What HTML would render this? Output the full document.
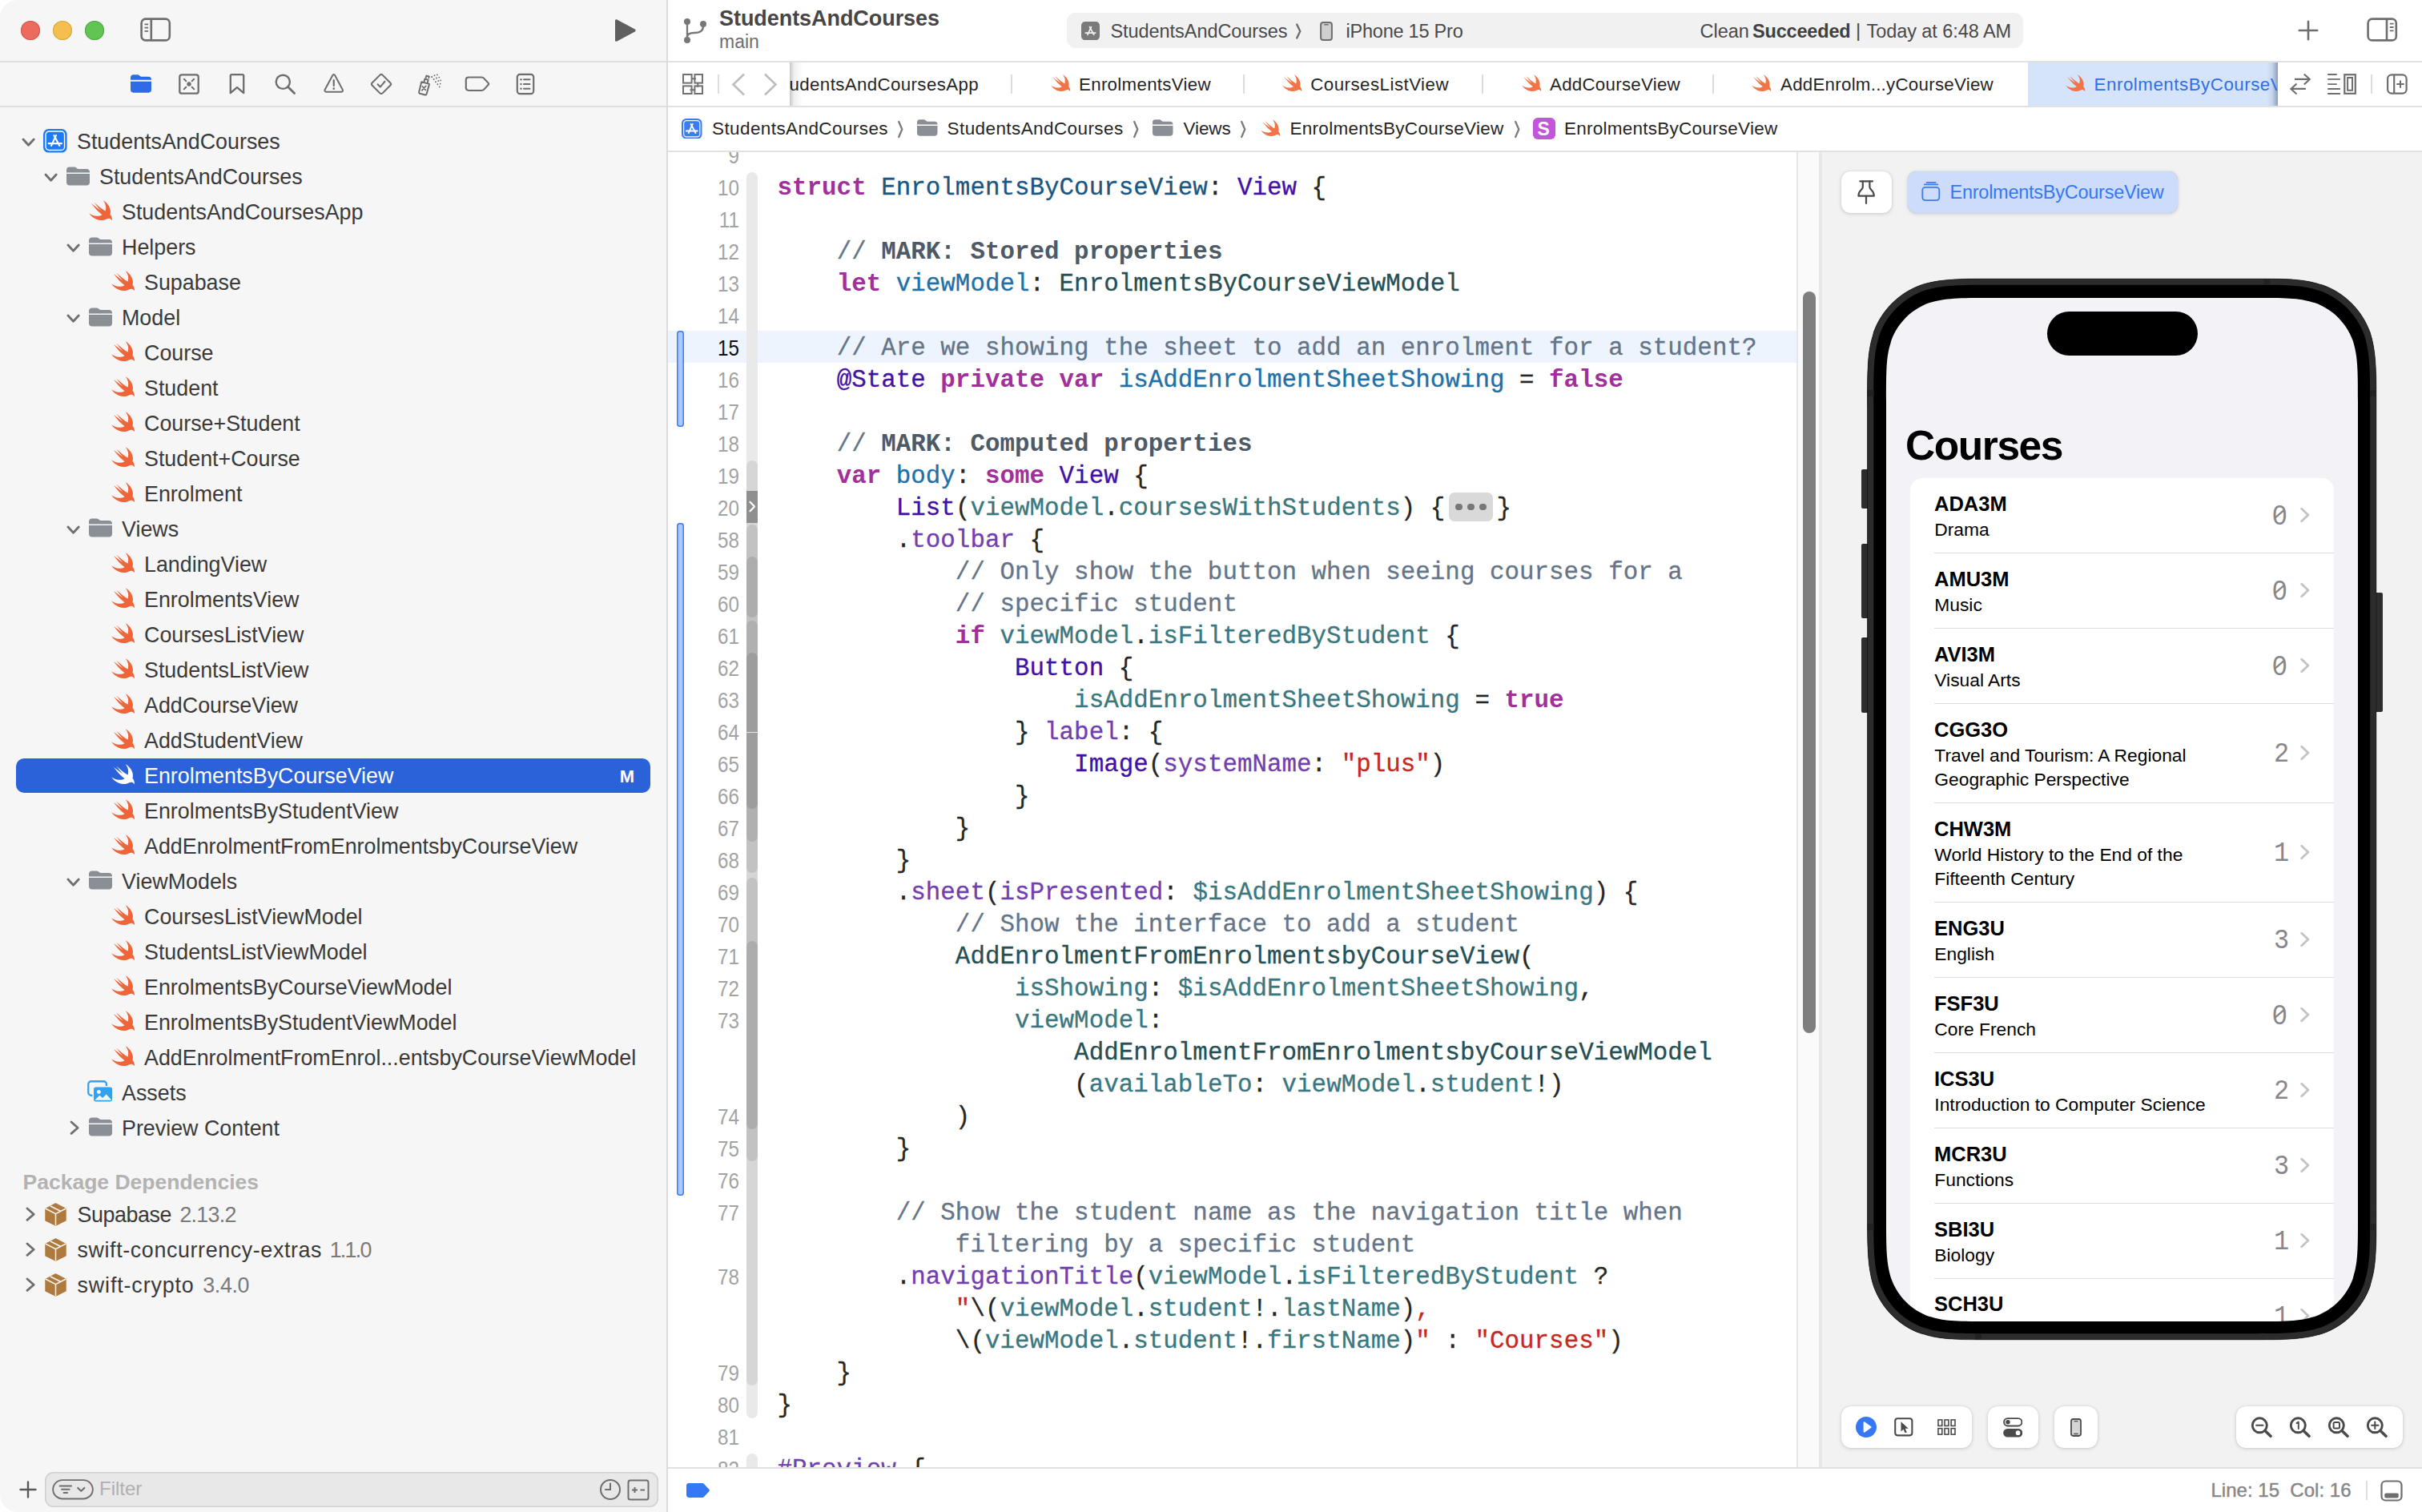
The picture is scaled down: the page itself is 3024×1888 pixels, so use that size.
<!DOCTYPE html><html><head><meta charset="utf-8"><title>Xcode</title><style>
html,body{margin:0;padding:0;background:#fff;}body{width:3024px;height:1888px;position:relative;overflow:hidden;font-family:"Liberation Sans",sans-serif;}
#w{position:absolute;left:0;top:0;width:3024px;height:1888px;overflow:hidden;}

.cl{position:absolute;left:970.5px;height:40px;font:400 30.83px/40px "Liberation Mono",monospace;white-space:pre;color:#262626;letter-spacing:.03px;-webkit-text-stroke:.3px;}
.ln{position:absolute;left:834px;width:89px;text-align:right;font:400 27.500px/40px "Liberation Sans",sans-serif;color:#a3a3a3;transform:scaleX(.88);transform-origin:100% 50%;}
.k{color:#a0309a;font-weight:700;-webkit-text-stroke:0}.td{color:#1a5682}.st{color:#4111a5}.pt{color:#254f54}.pd{color:#2270a6}.pm{color:#3b777e}.sf{color:#7040ae}.c{color:#657588}.cm{color:#4e5a66;font-weight:700;-webkit-text-stroke:0}.s{color:#c6281f}

</style></head><body><div id="w">
<div style="position:absolute;left:0px;top:0px;width:833px;height:1888px;background:#f6f6f6;border-radius:22px 0 0 22px;"></div>
<div style="position:absolute;left:832px;top:0px;width:2px;height:1888px;background:#dcdcdc;"></div>
<div style="position:absolute;left:0px;top:76px;width:832px;height:2px;background:#dedede;"></div>
<div style="position:absolute;left:0px;top:132px;width:832px;height:2px;background:#dedede;"></div>
<div style="position:absolute;left:26px;top:26px;width:24px;height:24px;border-radius:50%;background:#ed6a5e;box-shadow:inset 0 0 0 1px #d5564b;"></div>
<div style="position:absolute;left:66px;top:26px;width:24px;height:24px;border-radius:50%;background:#f5bf4f;box-shadow:inset 0 0 0 1px #d9a43c;"></div>
<div style="position:absolute;left:106px;top:26px;width:24px;height:24px;border-radius:50%;background:#61c554;box-shadow:inset 0 0 0 1px #4fa93f;"></div>
<svg style="position:absolute;left:174px;top:21px;" width="42" height="32" viewBox="0 0 42 32" preserveAspectRatio="none"><rect x="2.600" y="2.600" width="35.200" height="26.800" rx="5.200" fill="none" stroke="#6e6e6e" stroke-width="2.600"/><path d="M14.800 2.600V29.400" stroke="#6e6e6e" stroke-width="2.600"/><path d="M6.500 9.300h4.600M6.500 13.600h4.600M6.500 17.900h4.600" stroke="#6e6e6e" stroke-width="1.800"/></svg>
<svg style="position:absolute;left:765px;top:23px;" width="32" height="30" viewBox="0 0 32 30" preserveAspectRatio="none"><path d="M3 2.800C3 1.500 4.300 .8 5.400 1.400L27.800 13.600c1.100.6 1.100 2.200 0 2.800L5.400 28.600C4.300 29.200 3 28.500 3 27.200z" fill="#5f5f5f"/></svg>
<svg style="position:absolute;left:163px;top:93px;" width="26" height="23" viewBox="0 0 26 23" preserveAspectRatio="none"><path fill="#2f6be6" d="M0 4C0 1.700 1.400 .3 3.600 .3h4.700c1.200 0 1.900.3 2.700 1l.8.700c.6.500 1.100.700 1.900.700h8.700c2.200 0 3.600 1.400 3.600 3.600v.500H0z"/><path fill="#2f6be6" d="M0 8.700h26v10.400c0 2.200-1.400 3.600-3.600 3.600H3.600C1.400 22.700 0 21.300 0 19.100z"/></svg>
<svg style="position:absolute;left:222px;top:91px;" width="28" height="28" viewBox="0 0 28 28" preserveAspectRatio="none"><rect x="2.300" y="2.300" width="23.400" height="23.400" rx="2.800" fill="none" stroke="#6e6e6e" stroke-width="2.300"/><circle cx="14" cy="14" r="2.700" fill="#6e6e6e"/><path d="M7.800 7.800l2.500 2.500M20.200 7.800l-2.500 2.500M7.800 20.200l2.500-2.500M20.200 20.200l-2.500-2.500" stroke="#6e6e6e" stroke-width="2" stroke-linecap="round"/></svg>
<svg style="position:absolute;left:285px;top:91px;" width="22" height="28" viewBox="0 0 22 28" preserveAspectRatio="none"><path d="M2.800 3.800c0-1 .6-1.600 1.600-1.600h13.200c1 0 1.600.6 1.600 1.600v21.400l-8.200-7-8.200 7z" fill="none" stroke="#6e6e6e" stroke-width="2.300" stroke-linejoin="round"/></svg>
<svg style="position:absolute;left:342px;top:91px;" width="28" height="28" viewBox="0 0 28 28" preserveAspectRatio="none"><circle cx="11.300" cy="11.300" r="8.600" fill="none" stroke="#6e6e6e" stroke-width="2.400"/><path d="M17.600 17.600L25.600 25.600" stroke="#6e6e6e" stroke-width="2.800" stroke-linecap="round"/></svg>
<svg style="position:absolute;left:403.5px;top:91px;" width="25.5" height="26" viewBox="0 0 28 27" preserveAspectRatio="none"><path d="M12.300 3.300c.8-1.400 2.600-1.400 3.400 0l10.400 18.400c.8 1.400 0 2.900-1.700 2.900H3.600c-1.700 0-2.500-1.500-1.700-2.900z" fill="none" stroke="#6e6e6e" stroke-width="2.200" stroke-linejoin="round"/><path d="M14 9.500v7.200" stroke="#6e6e6e" stroke-width="2.400" stroke-linecap="round"/><circle cx="14" cy="20.400" r="1.500" fill="#6e6e6e"/></svg>
<svg style="position:absolute;left:462px;top:91px;" width="28" height="28" viewBox="0 0 30 30" preserveAspectRatio="none"><path d="M13.300 2.800c1-1 2.400-1 3.400 0l10.500 10.500c1 1 1 2.400 0 3.400L16.700 27.200c-1 1-2.400 1-3.400 0L2.800 16.700c-1-1-1-2.400 0-3.400z" fill="none" stroke="#6e6e6e" stroke-width="2.200"/><path d="M10.300 15.300l3.300 3.500 6.200-7.300" fill="none" stroke="#6e6e6e" stroke-width="2.200" stroke-linecap="round" stroke-linejoin="round"/></svg>
<svg style="position:absolute;left:520px;top:90px;" width="34" height="30" viewBox="0 0 34 30" preserveAspectRatio="none"><g fill="none" stroke="#6e6e6e" stroke-width="2" stroke-linejoin="round"><path d="M6.300 12.300l9.700 2.600-3.400 12.700c-.2.700-.9 1.100-1.600.9L4 26.700c-.7-.2-1.100-.9-.9-1.600z"/><path d="M9.300 12.800l1.100-4.200 4.300 1.200-1.100 4.200"/><path d="M11.500 7.800l.9-3.200 3.300.9-.6 2.400"/></g><path d="M7.300 17.800l4 4.600M11.800 17.300l-5 5.600" stroke="#6e6e6e" stroke-width="1.700" stroke-linecap="round"/><g fill="#6e6e6e" transform="translate(-.5,1.800) scale(.96)"><circle cx="20.500" cy="4.500" r="1.100"/><circle cx="24" cy="2.600" r="1"/><circle cx="27.500" cy="1.600" r="1"/><circle cx="23" cy="7.500" r="1"/><circle cx="26.500" cy="6" r="1"/><circle cx="30" cy="5" r="1"/><circle cx="25.500" cy="10.800" r="1"/><circle cx="29" cy="9.500" r="1"/><circle cx="32" cy="9" r=".9"/><circle cx="28" cy="14" r="1"/><circle cx="31.500" cy="13.300" r=".9"/><circle cx="30.500" cy="17.300" r=".9"/></g></svg>
<svg style="position:absolute;left:580px;top:95px;" width="32" height="19.5" viewBox="0 0 32 22" preserveAspectRatio="none"><path d="M5.300 1.800h16c1.300 0 2.200.5 3 1.500l5.300 6.300c.7.900.7 1.900 0 2.800l-5.300 6.300c-.8 1-1.700 1.500-3 1.500h-16c-2.200 0-3.500-1.300-3.500-3.500V5.300c0-2.200 1.300-3.500 3.500-3.500z" fill="none" stroke="#6e6e6e" stroke-width="2.200"/></svg>
<svg style="position:absolute;left:644px;top:91px;" width="24" height="28" viewBox="0 0 24 28" preserveAspectRatio="none"><rect x="1.800" y="1.800" width="20.400" height="24.400" rx="3.600" fill="none" stroke="#6e6e6e" stroke-width="2.200"/><path d="M10 8.300h7.500M10 14h7.500M10 19.700h7.500" stroke="#6e6e6e" stroke-width="2" stroke-linecap="round"/><circle cx="6.500" cy="8.300" r="1.200" fill="#6e6e6e"/><circle cx="6.500" cy="14" r="1.200" fill="#6e6e6e"/><circle cx="6.500" cy="19.700" r="1.200" fill="#6e6e6e"/></svg>
<svg style="position:absolute;left:27.4px;top:172.20000000000002px;" width="17.2" height="11.2" viewBox="-2 -2 17.2 11.2" preserveAspectRatio="none"><path d="M0 0L6.6 7.2L13.2 0" fill="none" stroke="#6f6f6f" stroke-width="2.8" stroke-linecap="round" stroke-linejoin="round"/></svg>
<svg style="position:absolute;left:54.4px;top:161.10000000000002px;" width="29.6" height="29.6" viewBox="0 0 30 30" preserveAspectRatio="none"><rect x="0" y="0" width="30" height="30" rx="6.8" fill="#1f7af5"/><rect x="3.1" y="3.1" width="23.8" height="23.8" rx="4.2" fill="none" stroke="#fff" stroke-width="1.4"/><g stroke="#fff" stroke-width="2.2" stroke-linecap="round" fill="none"><path d="M10.2 21.2L16.2 8.2"/><path d="M13.6 8.2L20.6 21.2"/><path d="M6.800 18.300H23.200"/></g></svg>
<span style="position:absolute;top:164.47px;font:400 26.85px/1 'Liberation Sans',sans-serif;color:#3a3a3a;white-space:pre;left:96.00px;">StudentsAndCourses</span>
<svg style="position:absolute;left:55.4px;top:216.17000000000002px;" width="17.2" height="11.2" viewBox="-2 -2 17.2 11.2" preserveAspectRatio="none"><path d="M0 0L6.6 7.2L13.2 0" fill="none" stroke="#6f6f6f" stroke-width="2.8" stroke-linecap="round" stroke-linejoin="round"/></svg>
<svg style="position:absolute;left:83px;top:207.77px;" width="29" height="24" viewBox="0 0 29 24" preserveAspectRatio="none"><path fill="#8a8e95" d="M0 4.2C0 1.9 1.5 .4 3.8 .4h5.4c1.3 0 2 .3 2.9 1.1l.9.8c.6.5 1.1.7 2 .7h10.2c2.3 0 3.8 1.5 3.8 3.8v.6H0z"/><path fill="#8a8e95" d="M0 9h29v10.8c0 2.3-1.5 3.8-3.8 3.8H3.8C1.500 23.6 0 22.100 0 19.800z"/></svg>
<span style="position:absolute;top:208.44px;font:400 26.85px/1 'Liberation Sans',sans-serif;color:#3a3a3a;white-space:pre;left:124.00px;">StudentsAndCourses</span>
<svg style="position:absolute;left:110.7px;top:250.24px;overflow:visible;" width="29.2" height="25.6" viewBox="2.3 3.3 18.4 16.6" preserveAspectRatio="none"><path fill="#f0643a" d="M13.543 3.41c4.114 2.47 6.545 7.162 5.549 11.131-.024.093-.05.181-.076.272l.002.001c2.062 2.538 1.5 5.258 1.236 4.745-1.072-2.086-3.066-1.568-4.088-1.043a6.803 6.803 0 0 1-.281.158l-.02.012-.002.002c-2.115 1.123-4.957 1.205-7.812-.022a12.568 12.568 0 0 1-5.64-4.838c.649.48 1.35.902 2.097 1.252 3.019 1.414 6.051 1.311 8.197-.002C9.651 12.73 7.101 9.67 5.146 7.191a10.628 10.628 0 0 1-1.005-1.384c2.34 2.142 6.038 4.83 7.365 5.576C8.69 8.408 6.208 4.743 6.324 4.86c4.436 4.47 8.528 6.996 8.528 6.996.154.085.27.154.36.213.085-.215.16-.437.224-.668.708-2.588-.09-5.548-1.893-7.992z"/></svg>
<span style="position:absolute;top:252.41px;font:400 26.85px/1 'Liberation Sans',sans-serif;color:#3a3a3a;white-space:pre;left:152.00px;">StudentsAndCoursesApp</span>
<svg style="position:absolute;left:83.4px;top:304.11px;" width="17.2" height="11.2" viewBox="-2 -2 17.2 11.2" preserveAspectRatio="none"><path d="M0 0L6.6 7.2L13.2 0" fill="none" stroke="#6f6f6f" stroke-width="2.8" stroke-linecap="round" stroke-linejoin="round"/></svg>
<svg style="position:absolute;left:111px;top:295.71000000000004px;" width="29" height="24" viewBox="0 0 29 24" preserveAspectRatio="none"><path fill="#8a8e95" d="M0 4.2C0 1.9 1.5 .4 3.8 .4h5.4c1.3 0 2 .3 2.9 1.1l.9.8c.6.5 1.1.7 2 .7h10.2c2.3 0 3.8 1.5 3.8 3.8v.6H0z"/><path fill="#8a8e95" d="M0 9h29v10.8c0 2.3-1.5 3.8-3.8 3.8H3.8C1.500 23.6 0 22.100 0 19.800z"/></svg>
<span style="position:absolute;top:296.38px;font:400 26.85px/1 'Liberation Sans',sans-serif;color:#3a3a3a;white-space:pre;left:152.00px;">Helpers</span>
<svg style="position:absolute;left:138.7px;top:338.18px;overflow:visible;" width="29.2" height="25.6" viewBox="2.3 3.3 18.4 16.6" preserveAspectRatio="none"><path fill="#f0643a" d="M13.543 3.41c4.114 2.47 6.545 7.162 5.549 11.131-.024.093-.05.181-.076.272l.002.001c2.062 2.538 1.5 5.258 1.236 4.745-1.072-2.086-3.066-1.568-4.088-1.043a6.803 6.803 0 0 1-.281.158l-.02.012-.002.002c-2.115 1.123-4.957 1.205-7.812-.022a12.568 12.568 0 0 1-5.64-4.838c.649.48 1.35.902 2.097 1.252 3.019 1.414 6.051 1.311 8.197-.002C9.651 12.73 7.101 9.67 5.146 7.191a10.628 10.628 0 0 1-1.005-1.384c2.34 2.142 6.038 4.83 7.365 5.576C8.69 8.408 6.208 4.743 6.324 4.86c4.436 4.47 8.528 6.996 8.528 6.996.154.085.27.154.36.213.085-.215.16-.437.224-.668.708-2.588-.09-5.548-1.893-7.992z"/></svg>
<span style="position:absolute;top:340.35px;font:400 26.85px/1 'Liberation Sans',sans-serif;color:#3a3a3a;white-space:pre;left:180.00px;">Supabase</span>
<svg style="position:absolute;left:83.4px;top:392.04999999999995px;" width="17.2" height="11.2" viewBox="-2 -2 17.2 11.2" preserveAspectRatio="none"><path d="M0 0L6.6 7.2L13.2 0" fill="none" stroke="#6f6f6f" stroke-width="2.8" stroke-linecap="round" stroke-linejoin="round"/></svg>
<svg style="position:absolute;left:111px;top:383.65px;" width="29" height="24" viewBox="0 0 29 24" preserveAspectRatio="none"><path fill="#8a8e95" d="M0 4.2C0 1.9 1.5 .4 3.8 .4h5.4c1.3 0 2 .3 2.9 1.1l.9.8c.6.5 1.1.7 2 .7h10.2c2.3 0 3.8 1.5 3.8 3.8v.6H0z"/><path fill="#8a8e95" d="M0 9h29v10.8c0 2.3-1.5 3.8-3.8 3.8H3.8C1.500 23.6 0 22.100 0 19.800z"/></svg>
<span style="position:absolute;top:384.32px;font:400 26.85px/1 'Liberation Sans',sans-serif;color:#3a3a3a;white-space:pre;left:152.00px;">Model</span>
<svg style="position:absolute;left:138.7px;top:426.12px;overflow:visible;" width="29.2" height="25.6" viewBox="2.3 3.3 18.4 16.6" preserveAspectRatio="none"><path fill="#f0643a" d="M13.543 3.41c4.114 2.47 6.545 7.162 5.549 11.131-.024.093-.05.181-.076.272l.002.001c2.062 2.538 1.5 5.258 1.236 4.745-1.072-2.086-3.066-1.568-4.088-1.043a6.803 6.803 0 0 1-.281.158l-.02.012-.002.002c-2.115 1.123-4.957 1.205-7.812-.022a12.568 12.568 0 0 1-5.64-4.838c.649.48 1.35.902 2.097 1.252 3.019 1.414 6.051 1.311 8.197-.002C9.651 12.73 7.101 9.67 5.146 7.191a10.628 10.628 0 0 1-1.005-1.384c2.34 2.142 6.038 4.83 7.365 5.576C8.69 8.408 6.208 4.743 6.324 4.86c4.436 4.47 8.528 6.996 8.528 6.996.154.085.27.154.36.213.085-.215.16-.437.224-.668.708-2.588-.09-5.548-1.893-7.992z"/></svg>
<span style="position:absolute;top:428.29px;font:400 26.85px/1 'Liberation Sans',sans-serif;color:#3a3a3a;white-space:pre;left:180.00px;">Course</span>
<svg style="position:absolute;left:138.7px;top:470.09px;overflow:visible;" width="29.2" height="25.6" viewBox="2.3 3.3 18.4 16.6" preserveAspectRatio="none"><path fill="#f0643a" d="M13.543 3.41c4.114 2.47 6.545 7.162 5.549 11.131-.024.093-.05.181-.076.272l.002.001c2.062 2.538 1.5 5.258 1.236 4.745-1.072-2.086-3.066-1.568-4.088-1.043a6.803 6.803 0 0 1-.281.158l-.02.012-.002.002c-2.115 1.123-4.957 1.205-7.812-.022a12.568 12.568 0 0 1-5.64-4.838c.649.48 1.35.902 2.097 1.252 3.019 1.414 6.051 1.311 8.197-.002C9.651 12.73 7.101 9.67 5.146 7.191a10.628 10.628 0 0 1-1.005-1.384c2.34 2.142 6.038 4.83 7.365 5.576C8.69 8.408 6.208 4.743 6.324 4.86c4.436 4.47 8.528 6.996 8.528 6.996.154.085.27.154.36.213.085-.215.16-.437.224-.668.708-2.588-.09-5.548-1.893-7.992z"/></svg>
<span style="position:absolute;top:472.26px;font:400 26.85px/1 'Liberation Sans',sans-serif;color:#3a3a3a;white-space:pre;left:180.00px;">Student</span>
<svg style="position:absolute;left:138.7px;top:514.06px;overflow:visible;" width="29.2" height="25.6" viewBox="2.3 3.3 18.4 16.6" preserveAspectRatio="none"><path fill="#f0643a" d="M13.543 3.41c4.114 2.47 6.545 7.162 5.549 11.131-.024.093-.05.181-.076.272l.002.001c2.062 2.538 1.5 5.258 1.236 4.745-1.072-2.086-3.066-1.568-4.088-1.043a6.803 6.803 0 0 1-.281.158l-.02.012-.002.002c-2.115 1.123-4.957 1.205-7.812-.022a12.568 12.568 0 0 1-5.64-4.838c.649.48 1.35.902 2.097 1.252 3.019 1.414 6.051 1.311 8.197-.002C9.651 12.73 7.101 9.67 5.146 7.191a10.628 10.628 0 0 1-1.005-1.384c2.34 2.142 6.038 4.83 7.365 5.576C8.69 8.408 6.208 4.743 6.324 4.86c4.436 4.47 8.528 6.996 8.528 6.996.154.085.27.154.36.213.085-.215.16-.437.224-.668.708-2.588-.09-5.548-1.893-7.992z"/></svg>
<span style="position:absolute;top:516.23px;font:400 26.85px/1 'Liberation Sans',sans-serif;color:#3a3a3a;white-space:pre;left:180.00px;">Course+Student</span>
<svg style="position:absolute;left:138.7px;top:558.03px;overflow:visible;" width="29.2" height="25.6" viewBox="2.3 3.3 18.4 16.6" preserveAspectRatio="none"><path fill="#f0643a" d="M13.543 3.41c4.114 2.47 6.545 7.162 5.549 11.131-.024.093-.05.181-.076.272l.002.001c2.062 2.538 1.5 5.258 1.236 4.745-1.072-2.086-3.066-1.568-4.088-1.043a6.803 6.803 0 0 1-.281.158l-.02.012-.002.002c-2.115 1.123-4.957 1.205-7.812-.022a12.568 12.568 0 0 1-5.64-4.838c.649.48 1.35.902 2.097 1.252 3.019 1.414 6.051 1.311 8.197-.002C9.651 12.73 7.101 9.67 5.146 7.191a10.628 10.628 0 0 1-1.005-1.384c2.34 2.142 6.038 4.83 7.365 5.576C8.69 8.408 6.208 4.743 6.324 4.86c4.436 4.47 8.528 6.996 8.528 6.996.154.085.27.154.36.213.085-.215.16-.437.224-.668.708-2.588-.09-5.548-1.893-7.992z"/></svg>
<span style="position:absolute;top:560.20px;font:400 26.85px/1 'Liberation Sans',sans-serif;color:#3a3a3a;white-space:pre;left:180.00px;">Student+Course</span>
<svg style="position:absolute;left:138.7px;top:602.0px;overflow:visible;" width="29.2" height="25.6" viewBox="2.3 3.3 18.4 16.6" preserveAspectRatio="none"><path fill="#f0643a" d="M13.543 3.41c4.114 2.47 6.545 7.162 5.549 11.131-.024.093-.05.181-.076.272l.002.001c2.062 2.538 1.5 5.258 1.236 4.745-1.072-2.086-3.066-1.568-4.088-1.043a6.803 6.803 0 0 1-.281.158l-.02.012-.002.002c-2.115 1.123-4.957 1.205-7.812-.022a12.568 12.568 0 0 1-5.64-4.838c.649.48 1.35.902 2.097 1.252 3.019 1.414 6.051 1.311 8.197-.002C9.651 12.73 7.101 9.67 5.146 7.191a10.628 10.628 0 0 1-1.005-1.384c2.34 2.142 6.038 4.83 7.365 5.576C8.69 8.408 6.208 4.743 6.324 4.86c4.436 4.47 8.528 6.996 8.528 6.996.154.085.27.154.36.213.085-.215.16-.437.224-.668.708-2.588-.09-5.548-1.893-7.992z"/></svg>
<span style="position:absolute;top:604.17px;font:400 26.85px/1 'Liberation Sans',sans-serif;color:#3a3a3a;white-space:pre;left:180.00px;">Enrolment</span>
<svg style="position:absolute;left:83.4px;top:655.87px;" width="17.2" height="11.2" viewBox="-2 -2 17.2 11.2" preserveAspectRatio="none"><path d="M0 0L6.6 7.2L13.2 0" fill="none" stroke="#6f6f6f" stroke-width="2.8" stroke-linecap="round" stroke-linejoin="round"/></svg>
<svg style="position:absolute;left:111px;top:647.47px;" width="29" height="24" viewBox="0 0 29 24" preserveAspectRatio="none"><path fill="#8a8e95" d="M0 4.2C0 1.9 1.5 .4 3.8 .4h5.4c1.3 0 2 .3 2.9 1.1l.9.8c.6.5 1.1.7 2 .7h10.2c2.3 0 3.8 1.5 3.8 3.8v.6H0z"/><path fill="#8a8e95" d="M0 9h29v10.8c0 2.3-1.5 3.8-3.8 3.8H3.8C1.500 23.6 0 22.100 0 19.800z"/></svg>
<span style="position:absolute;top:648.14px;font:400 26.85px/1 'Liberation Sans',sans-serif;color:#3a3a3a;white-space:pre;left:152.00px;">Views</span>
<svg style="position:absolute;left:138.7px;top:689.94px;overflow:visible;" width="29.2" height="25.6" viewBox="2.3 3.3 18.4 16.6" preserveAspectRatio="none"><path fill="#f0643a" d="M13.543 3.41c4.114 2.47 6.545 7.162 5.549 11.131-.024.093-.05.181-.076.272l.002.001c2.062 2.538 1.5 5.258 1.236 4.745-1.072-2.086-3.066-1.568-4.088-1.043a6.803 6.803 0 0 1-.281.158l-.02.012-.002.002c-2.115 1.123-4.957 1.205-7.812-.022a12.568 12.568 0 0 1-5.64-4.838c.649.48 1.35.902 2.097 1.252 3.019 1.414 6.051 1.311 8.197-.002C9.651 12.73 7.101 9.67 5.146 7.191a10.628 10.628 0 0 1-1.005-1.384c2.34 2.142 6.038 4.83 7.365 5.576C8.69 8.408 6.208 4.743 6.324 4.86c4.436 4.47 8.528 6.996 8.528 6.996.154.085.27.154.36.213.085-.215.16-.437.224-.668.708-2.588-.09-5.548-1.893-7.992z"/></svg>
<span style="position:absolute;top:692.11px;font:400 26.85px/1 'Liberation Sans',sans-serif;color:#3a3a3a;white-space:pre;left:180.00px;">LandingView</span>
<svg style="position:absolute;left:138.7px;top:733.9100000000001px;overflow:visible;" width="29.2" height="25.6" viewBox="2.3 3.3 18.4 16.6" preserveAspectRatio="none"><path fill="#f0643a" d="M13.543 3.41c4.114 2.47 6.545 7.162 5.549 11.131-.024.093-.05.181-.076.272l.002.001c2.062 2.538 1.5 5.258 1.236 4.745-1.072-2.086-3.066-1.568-4.088-1.043a6.803 6.803 0 0 1-.281.158l-.02.012-.002.002c-2.115 1.123-4.957 1.205-7.812-.022a12.568 12.568 0 0 1-5.64-4.838c.649.48 1.35.902 2.097 1.252 3.019 1.414 6.051 1.311 8.197-.002C9.651 12.73 7.101 9.67 5.146 7.191a10.628 10.628 0 0 1-1.005-1.384c2.34 2.142 6.038 4.83 7.365 5.576C8.69 8.408 6.208 4.743 6.324 4.86c4.436 4.47 8.528 6.996 8.528 6.996.154.085.27.154.36.213.085-.215.16-.437.224-.668.708-2.588-.09-5.548-1.893-7.992z"/></svg>
<span style="position:absolute;top:736.08px;font:400 26.85px/1 'Liberation Sans',sans-serif;color:#3a3a3a;white-space:pre;left:180.00px;">EnrolmentsView</span>
<svg style="position:absolute;left:138.7px;top:777.8799999999999px;overflow:visible;" width="29.2" height="25.6" viewBox="2.3 3.3 18.4 16.6" preserveAspectRatio="none"><path fill="#f0643a" d="M13.543 3.41c4.114 2.47 6.545 7.162 5.549 11.131-.024.093-.05.181-.076.272l.002.001c2.062 2.538 1.5 5.258 1.236 4.745-1.072-2.086-3.066-1.568-4.088-1.043a6.803 6.803 0 0 1-.281.158l-.02.012-.002.002c-2.115 1.123-4.957 1.205-7.812-.022a12.568 12.568 0 0 1-5.64-4.838c.649.48 1.35.902 2.097 1.252 3.019 1.414 6.051 1.311 8.197-.002C9.651 12.73 7.101 9.67 5.146 7.191a10.628 10.628 0 0 1-1.005-1.384c2.34 2.142 6.038 4.83 7.365 5.576C8.69 8.408 6.208 4.743 6.324 4.86c4.436 4.47 8.528 6.996 8.528 6.996.154.085.27.154.36.213.085-.215.16-.437.224-.668.708-2.588-.09-5.548-1.893-7.992z"/></svg>
<span style="position:absolute;top:780.05px;font:400 26.85px/1 'Liberation Sans',sans-serif;color:#3a3a3a;white-space:pre;left:180.00px;">CoursesListView</span>
<svg style="position:absolute;left:138.7px;top:821.8499999999999px;overflow:visible;" width="29.2" height="25.6" viewBox="2.3 3.3 18.4 16.6" preserveAspectRatio="none"><path fill="#f0643a" d="M13.543 3.41c4.114 2.47 6.545 7.162 5.549 11.131-.024.093-.05.181-.076.272l.002.001c2.062 2.538 1.5 5.258 1.236 4.745-1.072-2.086-3.066-1.568-4.088-1.043a6.803 6.803 0 0 1-.281.158l-.02.012-.002.002c-2.115 1.123-4.957 1.205-7.812-.022a12.568 12.568 0 0 1-5.64-4.838c.649.48 1.35.902 2.097 1.252 3.019 1.414 6.051 1.311 8.197-.002C9.651 12.73 7.101 9.67 5.146 7.191a10.628 10.628 0 0 1-1.005-1.384c2.34 2.142 6.038 4.83 7.365 5.576C8.69 8.408 6.208 4.743 6.324 4.86c4.436 4.47 8.528 6.996 8.528 6.996.154.085.27.154.36.213.085-.215.16-.437.224-.668.708-2.588-.09-5.548-1.893-7.992z"/></svg>
<span style="position:absolute;top:824.02px;font:400 26.85px/1 'Liberation Sans',sans-serif;color:#3a3a3a;white-space:pre;left:180.00px;">StudentsListView</span>
<svg style="position:absolute;left:138.7px;top:865.8199999999999px;overflow:visible;" width="29.2" height="25.6" viewBox="2.3 3.3 18.4 16.6" preserveAspectRatio="none"><path fill="#f0643a" d="M13.543 3.41c4.114 2.47 6.545 7.162 5.549 11.131-.024.093-.05.181-.076.272l.002.001c2.062 2.538 1.5 5.258 1.236 4.745-1.072-2.086-3.066-1.568-4.088-1.043a6.803 6.803 0 0 1-.281.158l-.02.012-.002.002c-2.115 1.123-4.957 1.205-7.812-.022a12.568 12.568 0 0 1-5.64-4.838c.649.48 1.35.902 2.097 1.252 3.019 1.414 6.051 1.311 8.197-.002C9.651 12.73 7.101 9.67 5.146 7.191a10.628 10.628 0 0 1-1.005-1.384c2.34 2.142 6.038 4.83 7.365 5.576C8.69 8.408 6.208 4.743 6.324 4.86c4.436 4.47 8.528 6.996 8.528 6.996.154.085.27.154.36.213.085-.215.16-.437.224-.668.708-2.588-.09-5.548-1.893-7.992z"/></svg>
<span style="position:absolute;top:867.99px;font:400 26.85px/1 'Liberation Sans',sans-serif;color:#3a3a3a;white-space:pre;left:180.00px;">AddCourseView</span>
<svg style="position:absolute;left:138.7px;top:909.79px;overflow:visible;" width="29.2" height="25.6" viewBox="2.3 3.3 18.4 16.6" preserveAspectRatio="none"><path fill="#f0643a" d="M13.543 3.41c4.114 2.47 6.545 7.162 5.549 11.131-.024.093-.05.181-.076.272l.002.001c2.062 2.538 1.5 5.258 1.236 4.745-1.072-2.086-3.066-1.568-4.088-1.043a6.803 6.803 0 0 1-.281.158l-.02.012-.002.002c-2.115 1.123-4.957 1.205-7.812-.022a12.568 12.568 0 0 1-5.64-4.838c.649.48 1.35.902 2.097 1.252 3.019 1.414 6.051 1.311 8.197-.002C9.651 12.73 7.101 9.67 5.146 7.191a10.628 10.628 0 0 1-1.005-1.384c2.34 2.142 6.038 4.83 7.365 5.576C8.69 8.408 6.208 4.743 6.324 4.86c4.436 4.47 8.528 6.996 8.528 6.996.154.085.27.154.36.213.085-.215.16-.437.224-.668.708-2.588-.09-5.548-1.893-7.992z"/></svg>
<span style="position:absolute;top:911.96px;font:400 26.85px/1 'Liberation Sans',sans-serif;color:#3a3a3a;white-space:pre;left:180.00px;">AddStudentView</span>
<div style="position:absolute;left:20px;top:946.76px;width:792px;height:43px;background:#2b62d9;border-radius:10px;"></div>
<span style="position:absolute;top:959.24px;font:700 22px/1 'Liberation Sans',sans-serif;color:#fff;white-space:pre;right:2232.00px;">M</span>
<svg style="position:absolute;left:138.7px;top:953.76px;overflow:visible;" width="29.2" height="25.6" viewBox="2.3 3.3 18.4 16.6" preserveAspectRatio="none"><path fill="#fff" d="M13.543 3.41c4.114 2.47 6.545 7.162 5.549 11.131-.024.093-.05.181-.076.272l.002.001c2.062 2.538 1.5 5.258 1.236 4.745-1.072-2.086-3.066-1.568-4.088-1.043a6.803 6.803 0 0 1-.281.158l-.02.012-.002.002c-2.115 1.123-4.957 1.205-7.812-.022a12.568 12.568 0 0 1-5.64-4.838c.649.48 1.35.902 2.097 1.252 3.019 1.414 6.051 1.311 8.197-.002C9.651 12.73 7.101 9.67 5.146 7.191a10.628 10.628 0 0 1-1.005-1.384c2.34 2.142 6.038 4.83 7.365 5.576C8.69 8.408 6.208 4.743 6.324 4.86c4.436 4.47 8.528 6.996 8.528 6.996.154.085.27.154.36.213.085-.215.16-.437.224-.668.708-2.588-.09-5.548-1.893-7.992z"/></svg>
<span style="position:absolute;top:955.93px;font:400 26.85px/1 'Liberation Sans',sans-serif;color:#fff;white-space:pre;left:180.00px;">EnrolmentsByCourseView</span>
<svg style="position:absolute;left:138.7px;top:997.73px;overflow:visible;" width="29.2" height="25.6" viewBox="2.3 3.3 18.4 16.6" preserveAspectRatio="none"><path fill="#f0643a" d="M13.543 3.41c4.114 2.47 6.545 7.162 5.549 11.131-.024.093-.05.181-.076.272l.002.001c2.062 2.538 1.5 5.258 1.236 4.745-1.072-2.086-3.066-1.568-4.088-1.043a6.803 6.803 0 0 1-.281.158l-.02.012-.002.002c-2.115 1.123-4.957 1.205-7.812-.022a12.568 12.568 0 0 1-5.64-4.838c.649.48 1.35.902 2.097 1.252 3.019 1.414 6.051 1.311 8.197-.002C9.651 12.73 7.101 9.67 5.146 7.191a10.628 10.628 0 0 1-1.005-1.384c2.34 2.142 6.038 4.83 7.365 5.576C8.69 8.408 6.208 4.743 6.324 4.86c4.436 4.47 8.528 6.996 8.528 6.996.154.085.27.154.36.213.085-.215.16-.437.224-.668.708-2.588-.09-5.548-1.893-7.992z"/></svg>
<span style="position:absolute;top:999.90px;font:400 26.85px/1 'Liberation Sans',sans-serif;color:#3a3a3a;white-space:pre;left:180.00px;">EnrolmentsByStudentView</span>
<svg style="position:absolute;left:138.7px;top:1041.7px;overflow:visible;" width="29.2" height="25.6" viewBox="2.3 3.3 18.4 16.6" preserveAspectRatio="none"><path fill="#f0643a" d="M13.543 3.41c4.114 2.47 6.545 7.162 5.549 11.131-.024.093-.05.181-.076.272l.002.001c2.062 2.538 1.5 5.258 1.236 4.745-1.072-2.086-3.066-1.568-4.088-1.043a6.803 6.803 0 0 1-.281.158l-.02.012-.002.002c-2.115 1.123-4.957 1.205-7.812-.022a12.568 12.568 0 0 1-5.64-4.838c.649.48 1.35.902 2.097 1.252 3.019 1.414 6.051 1.311 8.197-.002C9.651 12.73 7.101 9.67 5.146 7.191a10.628 10.628 0 0 1-1.005-1.384c2.34 2.142 6.038 4.83 7.365 5.576C8.69 8.408 6.208 4.743 6.324 4.86c4.436 4.47 8.528 6.996 8.528 6.996.154.085.27.154.36.213.085-.215.16-.437.224-.668.708-2.588-.09-5.548-1.893-7.992z"/></svg>
<span style="position:absolute;top:1043.87px;font:400 26.85px/1 'Liberation Sans',sans-serif;color:#3a3a3a;white-space:pre;left:180.00px;">AddEnrolmentFromEnrolmentsbyCourseView</span>
<svg style="position:absolute;left:83.4px;top:1095.5700000000002px;" width="17.2" height="11.2" viewBox="-2 -2 17.2 11.2" preserveAspectRatio="none"><path d="M0 0L6.6 7.2L13.2 0" fill="none" stroke="#6f6f6f" stroke-width="2.8" stroke-linecap="round" stroke-linejoin="round"/></svg>
<svg style="position:absolute;left:111px;top:1087.17px;" width="29" height="24" viewBox="0 0 29 24" preserveAspectRatio="none"><path fill="#8a8e95" d="M0 4.2C0 1.9 1.5 .4 3.8 .4h5.4c1.3 0 2 .3 2.9 1.1l.9.8c.6.5 1.1.7 2 .7h10.2c2.3 0 3.8 1.5 3.8 3.8v.6H0z"/><path fill="#8a8e95" d="M0 9h29v10.8c0 2.3-1.5 3.8-3.8 3.8H3.8C1.500 23.6 0 22.100 0 19.800z"/></svg>
<span style="position:absolute;top:1087.84px;font:400 26.85px/1 'Liberation Sans',sans-serif;color:#3a3a3a;white-space:pre;left:152.00px;">ViewModels</span>
<svg style="position:absolute;left:138.7px;top:1129.6399999999999px;overflow:visible;" width="29.2" height="25.6" viewBox="2.3 3.3 18.4 16.6" preserveAspectRatio="none"><path fill="#f0643a" d="M13.543 3.41c4.114 2.47 6.545 7.162 5.549 11.131-.024.093-.05.181-.076.272l.002.001c2.062 2.538 1.5 5.258 1.236 4.745-1.072-2.086-3.066-1.568-4.088-1.043a6.803 6.803 0 0 1-.281.158l-.02.012-.002.002c-2.115 1.123-4.957 1.205-7.812-.022a12.568 12.568 0 0 1-5.64-4.838c.649.48 1.35.902 2.097 1.252 3.019 1.414 6.051 1.311 8.197-.002C9.651 12.73 7.101 9.67 5.146 7.191a10.628 10.628 0 0 1-1.005-1.384c2.34 2.142 6.038 4.83 7.365 5.576C8.69 8.408 6.208 4.743 6.324 4.86c4.436 4.47 8.528 6.996 8.528 6.996.154.085.27.154.36.213.085-.215.16-.437.224-.668.708-2.588-.09-5.548-1.893-7.992z"/></svg>
<span style="position:absolute;top:1131.81px;font:400 26.85px/1 'Liberation Sans',sans-serif;color:#3a3a3a;white-space:pre;left:180.00px;">CoursesListViewModel</span>
<svg style="position:absolute;left:138.7px;top:1173.61px;overflow:visible;" width="29.2" height="25.6" viewBox="2.3 3.3 18.4 16.6" preserveAspectRatio="none"><path fill="#f0643a" d="M13.543 3.41c4.114 2.47 6.545 7.162 5.549 11.131-.024.093-.05.181-.076.272l.002.001c2.062 2.538 1.5 5.258 1.236 4.745-1.072-2.086-3.066-1.568-4.088-1.043a6.803 6.803 0 0 1-.281.158l-.02.012-.002.002c-2.115 1.123-4.957 1.205-7.812-.022a12.568 12.568 0 0 1-5.64-4.838c.649.48 1.35.902 2.097 1.252 3.019 1.414 6.051 1.311 8.197-.002C9.651 12.73 7.101 9.67 5.146 7.191a10.628 10.628 0 0 1-1.005-1.384c2.34 2.142 6.038 4.83 7.365 5.576C8.69 8.408 6.208 4.743 6.324 4.86c4.436 4.47 8.528 6.996 8.528 6.996.154.085.27.154.36.213.085-.215.16-.437.224-.668.708-2.588-.09-5.548-1.893-7.992z"/></svg>
<span style="position:absolute;top:1175.78px;font:400 26.85px/1 'Liberation Sans',sans-serif;color:#3a3a3a;white-space:pre;left:180.00px;">StudentsListViewModel</span>
<svg style="position:absolute;left:138.7px;top:1217.58px;overflow:visible;" width="29.2" height="25.6" viewBox="2.3 3.3 18.4 16.6" preserveAspectRatio="none"><path fill="#f0643a" d="M13.543 3.41c4.114 2.47 6.545 7.162 5.549 11.131-.024.093-.05.181-.076.272l.002.001c2.062 2.538 1.5 5.258 1.236 4.745-1.072-2.086-3.066-1.568-4.088-1.043a6.803 6.803 0 0 1-.281.158l-.02.012-.002.002c-2.115 1.123-4.957 1.205-7.812-.022a12.568 12.568 0 0 1-5.64-4.838c.649.48 1.35.902 2.097 1.252 3.019 1.414 6.051 1.311 8.197-.002C9.651 12.73 7.101 9.67 5.146 7.191a10.628 10.628 0 0 1-1.005-1.384c2.34 2.142 6.038 4.83 7.365 5.576C8.69 8.408 6.208 4.743 6.324 4.86c4.436 4.47 8.528 6.996 8.528 6.996.154.085.27.154.36.213.085-.215.16-.437.224-.668.708-2.588-.09-5.548-1.893-7.992z"/></svg>
<span style="position:absolute;top:1219.75px;font:400 26.85px/1 'Liberation Sans',sans-serif;color:#3a3a3a;white-space:pre;left:180.00px;">EnrolmentsByCourseViewModel</span>
<svg style="position:absolute;left:138.7px;top:1261.55px;overflow:visible;" width="29.2" height="25.6" viewBox="2.3 3.3 18.4 16.6" preserveAspectRatio="none"><path fill="#f0643a" d="M13.543 3.41c4.114 2.47 6.545 7.162 5.549 11.131-.024.093-.05.181-.076.272l.002.001c2.062 2.538 1.5 5.258 1.236 4.745-1.072-2.086-3.066-1.568-4.088-1.043a6.803 6.803 0 0 1-.281.158l-.02.012-.002.002c-2.115 1.123-4.957 1.205-7.812-.022a12.568 12.568 0 0 1-5.64-4.838c.649.48 1.35.902 2.097 1.252 3.019 1.414 6.051 1.311 8.197-.002C9.651 12.73 7.101 9.67 5.146 7.191a10.628 10.628 0 0 1-1.005-1.384c2.34 2.142 6.038 4.83 7.365 5.576C8.69 8.408 6.208 4.743 6.324 4.86c4.436 4.47 8.528 6.996 8.528 6.996.154.085.27.154.36.213.085-.215.16-.437.224-.668.708-2.588-.09-5.548-1.893-7.992z"/></svg>
<span style="position:absolute;top:1263.72px;font:400 26.85px/1 'Liberation Sans',sans-serif;color:#3a3a3a;white-space:pre;left:180.00px;">EnrolmentsByStudentViewModel</span>
<svg style="position:absolute;left:138.7px;top:1305.52px;overflow:visible;" width="29.2" height="25.6" viewBox="2.3 3.3 18.4 16.6" preserveAspectRatio="none"><path fill="#f0643a" d="M13.543 3.41c4.114 2.47 6.545 7.162 5.549 11.131-.024.093-.05.181-.076.272l.002.001c2.062 2.538 1.5 5.258 1.236 4.745-1.072-2.086-3.066-1.568-4.088-1.043a6.803 6.803 0 0 1-.281.158l-.02.012-.002.002c-2.115 1.123-4.957 1.205-7.812-.022a12.568 12.568 0 0 1-5.64-4.838c.649.48 1.35.902 2.097 1.252 3.019 1.414 6.051 1.311 8.197-.002C9.651 12.73 7.101 9.67 5.146 7.191a10.628 10.628 0 0 1-1.005-1.384c2.34 2.142 6.038 4.83 7.365 5.576C8.69 8.408 6.208 4.743 6.324 4.86c4.436 4.47 8.528 6.996 8.528 6.996.154.085.27.154.36.213.085-.215.16-.437.224-.668.708-2.588-.09-5.548-1.893-7.992z"/></svg>
<span style="position:absolute;top:1307.69px;font:400 26.85px/1 'Liberation Sans',sans-serif;color:#3a3a3a;white-space:pre;left:180.00px;">AddEnrolmentFromEnrol...entsbyCourseViewModel</span>
<svg style="position:absolute;left:109px;top:1348.99px;" width="33" height="29" viewBox="0 0 32 28" preserveAspectRatio="none"><rect x="1.2" y="1.2" width="22" height="17" rx="3.5" fill="none" stroke="#2ea3f2" stroke-width="2.2"/><rect x="7" y="7.500" width="24" height="19" rx="3.5" fill="#2ea3f2" stroke="#f5f5f5" stroke-width="1.6"/><circle cx="14" cy="14" r="2.4" fill="#f5f5f5"/><path d="M9 24l6-6 3.500 3.200L23 17l6.500 7z" fill="#f5f5f5"/></svg>
<span style="position:absolute;top:1351.66px;font:400 26.85px/1 'Liberation Sans',sans-serif;color:#3a3a3a;white-space:pre;left:152.00px;">Assets</span>
<svg style="position:absolute;left:87.4px;top:1399.2599999999998px;" width="12.2" height="18.4" viewBox="-2 -2 12.2 18.4" preserveAspectRatio="none"><path d="M0 0L8.2 7.2L0 14.4" fill="none" stroke="#6f6f6f" stroke-width="2.8" stroke-linecap="round" stroke-linejoin="round"/></svg>
<svg style="position:absolute;left:111px;top:1394.9599999999998px;" width="29" height="24" viewBox="0 0 29 24" preserveAspectRatio="none"><path fill="#8a8e95" d="M0 4.2C0 1.9 1.5 .4 3.8 .4h5.4c1.3 0 2 .3 2.9 1.1l.9.8c.6.5 1.1.7 2 .7h10.2c2.3 0 3.8 1.5 3.8 3.8v.6H0z"/><path fill="#8a8e95" d="M0 9h29v10.8c0 2.3-1.5 3.8-3.8 3.8H3.8C1.500 23.6 0 22.100 0 19.800z"/></svg>
<span style="position:absolute;top:1395.63px;font:400 26.85px/1 'Liberation Sans',sans-serif;color:#3a3a3a;white-space:pre;left:152.00px;">Preview Content</span>
<span style="position:absolute;top:1462.97px;font:700 26.5px/1 'Liberation Sans',sans-serif;color:#b3b3b3;white-space:pre;left:28.50px;">Package Dependencies</span>
<svg style="position:absolute;left:32.1px;top:1506.8999999999999px;" width="12.2" height="18.4" viewBox="-2 -2 12.2 18.4" preserveAspectRatio="none"><path d="M0 0L8.2 7.2L0 14.4" fill="none" stroke="#6f6f6f" stroke-width="2.8" stroke-linecap="round" stroke-linejoin="round"/></svg>
<svg style="position:absolute;left:55px;top:1501.6px;" width="29" height="29" viewBox="0 0 28 28" preserveAspectRatio="none"><path d="M14 .8L26.2 6.900V21.300L14 27.400 1.800 21.300V6.900Z" fill="#ae7a3d" stroke="#ae7a3d" stroke-width="1" stroke-linejoin="round"/><path d="M1.600 6.800L14 13.200 26.400 6.800M14 13.200V27.600M7.700 3.800L20.200 10.100" fill="none" stroke="#f6f6f6" stroke-width="1.500"/></svg>
<span style="position:absolute;top:1504.27px;font:400 26.85px/1 'Liberation Sans',sans-serif;color:#3a3a3a;white-space:pre;left:96.50px;letter-spacing:-0.442px;">Supabase</span>
<span style="position:absolute;top:1504.27px;font:400 26.85px/1 'Liberation Sans',sans-serif;color:#7a7a7a;white-space:pre;left:224.40px;letter-spacing:-0.709px;">2.13.2</span>
<svg style="position:absolute;left:32.1px;top:1550.9999999999998px;" width="12.2" height="18.4" viewBox="-2 -2 12.2 18.4" preserveAspectRatio="none"><path d="M0 0L8.2 7.2L0 14.4" fill="none" stroke="#6f6f6f" stroke-width="2.8" stroke-linecap="round" stroke-linejoin="round"/></svg>
<svg style="position:absolute;left:55px;top:1545.6999999999998px;" width="29" height="29" viewBox="0 0 28 28" preserveAspectRatio="none"><path d="M14 .8L26.2 6.900V21.300L14 27.400 1.800 21.300V6.900Z" fill="#ae7a3d" stroke="#ae7a3d" stroke-width="1" stroke-linejoin="round"/><path d="M1.600 6.800L14 13.200 26.400 6.800M14 13.200V27.600M7.700 3.800L20.200 10.100" fill="none" stroke="#f6f6f6" stroke-width="1.500"/></svg>
<span style="position:absolute;top:1548.37px;font:400 26.85px/1 'Liberation Sans',sans-serif;color:#3a3a3a;white-space:pre;left:96.50px;letter-spacing:0.615px;">swift-concurrency-extras</span>
<span style="position:absolute;top:1548.37px;font:400 26.85px/1 'Liberation Sans',sans-serif;color:#7a7a7a;white-space:pre;left:411.70px;letter-spacing:-1.744px;">1.1.0</span>
<svg style="position:absolute;left:32.1px;top:1595.1px;" width="12.2" height="18.4" viewBox="-2 -2 12.2 18.4" preserveAspectRatio="none"><path d="M0 0L8.2 7.2L0 14.4" fill="none" stroke="#6f6f6f" stroke-width="2.8" stroke-linecap="round" stroke-linejoin="round"/></svg>
<svg style="position:absolute;left:55px;top:1589.8px;" width="29" height="29" viewBox="0 0 28 28" preserveAspectRatio="none"><path d="M14 .8L26.2 6.900V21.300L14 27.400 1.800 21.300V6.900Z" fill="#ae7a3d" stroke="#ae7a3d" stroke-width="1" stroke-linejoin="round"/><path d="M1.600 6.800L14 13.200 26.400 6.800M14 13.200V27.600M7.700 3.800L20.200 10.100" fill="none" stroke="#f6f6f6" stroke-width="1.500"/></svg>
<span style="position:absolute;top:1592.47px;font:400 26.85px/1 'Liberation Sans',sans-serif;color:#3a3a3a;white-space:pre;left:96.50px;letter-spacing:0.870px;">swift-crypto</span>
<span style="position:absolute;top:1592.47px;font:400 26.85px/1 'Liberation Sans',sans-serif;color:#7a7a7a;white-space:pre;left:253.20px;letter-spacing:-0.344px;">3.4.0</span>
<svg style="position:absolute;left:24px;top:1849px;" width="22" height="22" viewBox="0 0 22 22" preserveAspectRatio="none"><path d="M11 1.500v19M1.500 11h19" stroke="#5a5a5a" stroke-width="2.400" stroke-linecap="round"/></svg>
<div style="position:absolute;left:56px;top:1838.3px;width:765.5px;height:43.3px;background:#e8e8e8;border-radius:11px;box-shadow:inset 0 0 0 1.500px #d0d0d0;"></div>
<svg style="position:absolute;left:65px;top:1847px;" width="52" height="25.6" viewBox="0 0 54 27" preserveAspectRatio="none"><rect x="1.200" y="1.200" width="51.600" height="24.600" rx="12.300" fill="none" stroke="#6e6e6e" stroke-width="2"/><path d="M10 9h15M12.500 13.500h10M15.200 18h4.600" stroke="#6e6e6e" stroke-width="2" stroke-linecap="round"/><path d="M33.500 11.500l4.200 4.200 4.200-4.200" fill="none" stroke="#6e6e6e" stroke-width="2.200" stroke-linecap="round" stroke-linejoin="round"/></svg>
<span style="position:absolute;top:1846.78px;font:400 24px/1 'Liberation Sans',sans-serif;color:#b0b0b0;white-space:pre;left:124.00px;">Filter</span>
<svg style="position:absolute;left:748px;top:1846px;" width="28" height="28" viewBox="0 0 28 28" preserveAspectRatio="none"><circle cx="14" cy="14" r="12" fill="none" stroke="#6e6e6e" stroke-width="2"/><path d="M14 6.500V14H8" fill="none" stroke="#6e6e6e" stroke-width="2" stroke-linecap="round"/></svg>
<svg style="position:absolute;left:783px;top:1847px;" width="28" height="27" viewBox="0 0 28 27" preserveAspectRatio="none"><rect x="1.500" y="1.500" width="25" height="24" rx="2.500" fill="none" stroke="#6e6e6e" stroke-width="2"/><path d="M6 13.500h7M9.500 10v7M16.500 13.500h5.500" stroke="#6e6e6e" stroke-width="2"/></svg>
<div style="position:absolute;left:834px;top:76px;width:2190px;height:2px;background:#e1e1e1;"></div>
<div style="position:absolute;left:834px;top:132px;width:2190px;height:2px;background:#e1e1e1;"></div>
<div style="position:absolute;left:834px;top:188px;width:2190px;height:2px;background:#e1e1e1;"></div>
<svg style="position:absolute;left:852px;top:21px;" width="32" height="35" viewBox="0 0 32 35" preserveAspectRatio="none"><g fill="none" stroke="#777" stroke-width="2.300"><path d="M6 8v19"/><path d="M26 11.500c0 6.500-4 8.500-11 8.500-5 0-9 1-9 5"/></g><circle cx="6" cy="6" r="4" fill="#777"/><circle cx="26" cy="9" r="4" fill="#777"/><circle cx="6" cy="29" r="4" fill="#777"/></svg>
<span style="position:absolute;top:10.44px;font:700 27px/1 'Liberation Sans',sans-serif;color:#464646;white-space:pre;left:898.00px;letter-spacing:-0.057px;">StudentsAndCourses</span>
<span style="position:absolute;top:40.93px;font:400 23px/1 'Liberation Sans',sans-serif;color:#6e6e6e;white-space:pre;left:898.00px;">main</span>
<div style="position:absolute;left:1332px;top:16px;width:1194px;height:44px;background:#f1f1f1;border-radius:11px;"></div>
<svg style="position:absolute;left:1350px;top:26.8px;" width="23" height="23.2" viewBox="0 0 24 24" preserveAspectRatio="none"><rect width="24" height="24" rx="5" fill="#7a7a7a"/><g stroke="#f0f0f0" stroke-width="1.800" stroke-linecap="round" fill="none"><path d="M8.300 17L13 6.800"/><path d="M11 6.800L16.500 17"/><path d="M5.500 14.600H18.500"/></g></svg>
<span style="position:absolute;top:27.51px;font:400 23.5px/1 'Liberation Sans',sans-serif;color:#4a4a4a;white-space:pre;left:1386.50px;letter-spacing:-0.060px;">StudentsAndCourses</span>
<svg style="position:absolute;left:1616px;top:28px;" width="12" height="22" viewBox="0 0 12 22" preserveAspectRatio="none"><path d="M3.200 2.500L7.300 11 3.200 19.500" fill="none" stroke="#6e6e6e" stroke-width="2.400" stroke-linecap="round" stroke-linejoin="round"/></svg>
<svg style="position:absolute;left:1648px;top:27px;" width="16" height="24" viewBox="0 0 16 24" preserveAspectRatio="none"><rect x="1.100" y="1.100" width="13.800" height="21.800" rx="3" fill="#cfcfcf" stroke="#6e6e6e" stroke-width="2"/><path d="M5.800 3.800h4.400" stroke="#6e6e6e" stroke-width="1.600" stroke-linecap="round"/></svg>
<span style="position:absolute;top:27.51px;font:400 23.5px/1 'Liberation Sans',sans-serif;color:#4a4a4a;white-space:pre;left:1680.50px;letter-spacing:-0.227px;">iPhone 15 Pro</span>
<span style="position:absolute;top:27.51px;font:400 23.5px/1 'Liberation Sans',sans-serif;color:#4a4a4a;white-space:pre;left:2122.50px;">Clean </span>
<span style="position:absolute;top:27.51px;font:700 23.5px/1 'Liberation Sans',sans-serif;color:#404040;white-space:pre;left:2188.00px;letter-spacing:-0.177px;">Succeeded</span>
<span style="position:absolute;top:26.28px;font:400 24px/1 'Liberation Sans',sans-serif;color:#4a4a4a;white-space:pre;left:2317.00px;">|</span>
<span style="position:absolute;top:27.51px;font:400 23.5px/1 'Liberation Sans',sans-serif;color:#4a4a4a;white-space:pre;left:2330.50px;letter-spacing:-0.068px;">Today at 6:48 AM</span>
<svg style="position:absolute;left:2869px;top:25px;" width="26" height="26" viewBox="0 0 26 26" preserveAspectRatio="none"><path d="M13 1.800v22.400M1.800 13h22.400" stroke="#6e6e6e" stroke-width="2.600" stroke-linecap="round"/></svg>
<svg style="position:absolute;left:2953px;top:21px;" width="42" height="32" viewBox="0 0 42 32" preserveAspectRatio="none"><rect x="3.600" y="2.600" width="35.200" height="26.800" rx="5.200" fill="none" stroke="#6e6e6e" stroke-width="2.600"/><path d="M27 2.600V29.400" stroke="#6e6e6e" stroke-width="2.600"/><path d="M30.800 8.600h4.800M30.800 13h4.800M30.800 17.300h4.800" stroke="#6e6e6e" stroke-width="1.800"/></svg>
<div style="position:absolute;left:986px;top:78px;width:300px;height:54px;overflow:hidden;"><span style="position:absolute;top:17.22px;font:400 22.3px/1 'Liberation Sans',sans-serif;color:#262626;white-space:pre;left:-22.28px;letter-spacing:0.374px;">StudentsAndCoursesApp</span></div>
<div style="position:absolute;left:986px;top:78px;width:16px;height:54px;background:linear-gradient(90deg,rgba(0,0,0,.22),rgba(0,0,0,.06) 35%,rgba(0,0,0,0));"></div>
<div style="position:absolute;left:1262px;top:93px;width:2px;height:24px;background:#dcdcdc;"></div>
<div style="position:absolute;left:1552px;top:93px;width:2px;height:24px;background:#dcdcdc;"></div>
<div style="position:absolute;left:1850px;top:93px;width:2px;height:24px;background:#dcdcdc;"></div>
<div style="position:absolute;left:2138px;top:93px;width:2px;height:24px;background:#dcdcdc;"></div>
<svg style="position:absolute;left:1311.5px;top:93px;overflow:visible;" width="24.5" height="21.5" viewBox="2.3 3.3 18.4 16.6" preserveAspectRatio="none"><path fill="#f07446" d="M13.543 3.41c4.114 2.47 6.545 7.162 5.549 11.131-.024.093-.05.181-.076.272l.002.001c2.062 2.538 1.5 5.258 1.236 4.745-1.072-2.086-3.066-1.568-4.088-1.043a6.803 6.803 0 0 1-.281.158l-.02.012-.002.002c-2.115 1.123-4.957 1.205-7.812-.022a12.568 12.568 0 0 1-5.64-4.838c.649.48 1.35.902 2.097 1.252 3.019 1.414 6.051 1.311 8.197-.002C9.651 12.73 7.101 9.67 5.146 7.191a10.628 10.628 0 0 1-1.005-1.384c2.34 2.142 6.038 4.83 7.365 5.576C8.69 8.408 6.208 4.743 6.324 4.86c4.436 4.47 8.528 6.996 8.528 6.996.154.085.27.154.36.213.085-.215.16-.437.224-.668.708-2.588-.09-5.548-1.893-7.992z"/></svg>
<span style="position:absolute;top:95.22px;font:400 22.3px/1 'Liberation Sans',sans-serif;color:#262626;white-space:pre;left:1347.00px;letter-spacing:0.306px;">EnrolmentsView</span>
<svg style="position:absolute;left:1601px;top:93px;overflow:visible;" width="24.5" height="21.5" viewBox="2.3 3.3 18.4 16.6" preserveAspectRatio="none"><path fill="#f07446" d="M13.543 3.41c4.114 2.47 6.545 7.162 5.549 11.131-.024.093-.05.181-.076.272l.002.001c2.062 2.538 1.5 5.258 1.236 4.745-1.072-2.086-3.066-1.568-4.088-1.043a6.803 6.803 0 0 1-.281.158l-.02.012-.002.002c-2.115 1.123-4.957 1.205-7.812-.022a12.568 12.568 0 0 1-5.64-4.838c.649.48 1.35.902 2.097 1.252 3.019 1.414 6.051 1.311 8.197-.002C9.651 12.73 7.101 9.67 5.146 7.191a10.628 10.628 0 0 1-1.005-1.384c2.34 2.142 6.038 4.83 7.365 5.576C8.69 8.408 6.208 4.743 6.324 4.86c4.436 4.47 8.528 6.996 8.528 6.996.154.085.27.154.36.213.085-.215.16-.437.224-.668.708-2.588-.09-5.548-1.893-7.992z"/></svg>
<span style="position:absolute;top:95.22px;font:400 22.3px/1 'Liberation Sans',sans-serif;color:#262626;white-space:pre;left:1636.30px;letter-spacing:0.468px;">CoursesListView</span>
<svg style="position:absolute;left:1899.5px;top:93px;overflow:visible;" width="24.5" height="21.5" viewBox="2.3 3.3 18.4 16.6" preserveAspectRatio="none"><path fill="#f07446" d="M13.543 3.41c4.114 2.47 6.545 7.162 5.549 11.131-.024.093-.05.181-.076.272l.002.001c2.062 2.538 1.5 5.258 1.236 4.745-1.072-2.086-3.066-1.568-4.088-1.043a6.803 6.803 0 0 1-.281.158l-.02.012-.002.002c-2.115 1.123-4.957 1.205-7.812-.022a12.568 12.568 0 0 1-5.64-4.838c.649.48 1.35.902 2.097 1.252 3.019 1.414 6.051 1.311 8.197-.002C9.651 12.73 7.101 9.67 5.146 7.191a10.628 10.628 0 0 1-1.005-1.384c2.34 2.142 6.038 4.83 7.365 5.576C8.69 8.408 6.208 4.743 6.324 4.86c4.436 4.47 8.528 6.996 8.528 6.996.154.085.27.154.36.213.085-.215.16-.437.224-.668.708-2.588-.09-5.548-1.893-7.992z"/></svg>
<span style="position:absolute;top:95.22px;font:400 22.3px/1 'Liberation Sans',sans-serif;color:#262626;white-space:pre;left:1935.00px;letter-spacing:0.269px;">AddCourseView</span>
<svg style="position:absolute;left:2186.7px;top:93px;overflow:visible;" width="24.5" height="21.5" viewBox="2.3 3.3 18.4 16.6" preserveAspectRatio="none"><path fill="#f07446" d="M13.543 3.41c4.114 2.47 6.545 7.162 5.549 11.131-.024.093-.05.181-.076.272l.002.001c2.062 2.538 1.5 5.258 1.236 4.745-1.072-2.086-3.066-1.568-4.088-1.043a6.803 6.803 0 0 1-.281.158l-.02.012-.002.002c-2.115 1.123-4.957 1.205-7.812-.022a12.568 12.568 0 0 1-5.64-4.838c.649.48 1.35.902 2.097 1.252 3.019 1.414 6.051 1.311 8.197-.002C9.651 12.73 7.101 9.67 5.146 7.191a10.628 10.628 0 0 1-1.005-1.384c2.34 2.142 6.038 4.83 7.365 5.576C8.69 8.408 6.208 4.743 6.324 4.86c4.436 4.47 8.528 6.996 8.528 6.996.154.085.27.154.36.213.085-.215.16-.437.224-.668.708-2.588-.09-5.548-1.893-7.992z"/></svg>
<span style="position:absolute;top:95.22px;font:400 22.3px/1 'Liberation Sans',sans-serif;color:#262626;white-space:pre;left:2223.00px;letter-spacing:0.266px;">AddEnrolm...yCourseView</span>
<div style="position:absolute;left:2532px;top:78px;width:312px;height:54px;background:#d6e4fb;"></div>
<div style="position:absolute;left:2830px;top:78px;width:14px;height:54px;background:linear-gradient(90deg,rgba(90,110,150,0),rgba(90,110,150,.14) 50%,rgba(70,85,120,.5));"></div>
<svg style="position:absolute;left:2579px;top:93px;overflow:visible;" width="24.5" height="21.5" viewBox="2.3 3.3 18.4 16.6" preserveAspectRatio="none"><path fill="#f07446" d="M13.543 3.41c4.114 2.47 6.545 7.162 5.549 11.131-.024.093-.05.181-.076.272l.002.001c2.062 2.538 1.5 5.258 1.236 4.745-1.072-2.086-3.066-1.568-4.088-1.043a6.803 6.803 0 0 1-.281.158l-.02.012-.002.002c-2.115 1.123-4.957 1.205-7.812-.022a12.568 12.568 0 0 1-5.64-4.838c.649.48 1.35.902 2.097 1.252 3.019 1.414 6.051 1.311 8.197-.002C9.651 12.73 7.101 9.67 5.146 7.191a10.628 10.628 0 0 1-1.005-1.384c2.34 2.142 6.038 4.83 7.365 5.576C8.69 8.408 6.208 4.743 6.324 4.86c4.436 4.47 8.528 6.996 8.528 6.996.154.085.27.154.36.213.085-.215.16-.437.224-.668.708-2.588-.09-5.548-1.893-7.992z"/></svg>
<div style="position:absolute;left:2600px;top:78px;width:243px;height:54px;overflow:hidden;"><span style="position:absolute;top:17.22px;font:400 22.3px/1 'Liberation Sans',sans-serif;color:#2f6fe8;white-space:pre;left:14.60px;letter-spacing:0.530px;">EnrolmentsByCourseView</span></div>
<svg style="position:absolute;left:851px;top:91px;" width="28" height="28" viewBox="0 0 28 28" preserveAspectRatio="none"><g fill="none" stroke="#727272" stroke-width="2"><rect x="2" y="2" width="10.600" height="10.600"/><rect x="16.400" y="2" width="9.600" height="10.600"/><rect x="2" y="16.400" width="10.600" height="9.600"/><rect x="16.400" y="16.400" width="9.600" height="9.600"/><path d="M12.600 7.300h5.400M10.500 21.200h5.900M20.300 12.600v5.400"/></g></svg>
<div style="position:absolute;left:896px;top:93px;width:2px;height:24px;background:#dedede;"></div>
<svg style="position:absolute;left:912px;top:90px;" width="20" height="31" viewBox="0 0 20 31" preserveAspectRatio="none"><path d="M17 2.500L3.500 15.500 17 28.500" fill="none" stroke="#bdbdbd" stroke-width="2.600" stroke-linecap="butt"/></svg>
<svg style="position:absolute;left:952px;top:90px;" width="20" height="31" viewBox="0 0 20 31" preserveAspectRatio="none"><path d="M3 2.500L16.500 15.500 3 28.500" fill="none" stroke="#bdbdbd" stroke-width="2.600" stroke-linecap="butt"/></svg>
<svg style="position:absolute;left:2850px;top:86px;" width="174" height="40" viewBox="2850 86 174 40" preserveAspectRatio="none"><g fill="none" stroke="#6e6e6e" stroke-width="2.100" stroke-linecap="butt" stroke-linejoin="miter"><path d="M2865 98.900H2883.300M2876.800 92.500L2883.800 98.900 2876.800 105.500"/><path d="M2878.900 110.900H2860.900M2867.500 104.500L2860.400 110.900 2867.500 117.500"/></g><path d="M2906.200 93H2917.700M2906.200 98.900H2921.900M2906.200 105.100H2917.700M2906.200 111H2921.900M2906.200 117H2921.900" stroke="#6e6e6e" stroke-width="1.900" fill="none"/><rect x="2927.300" y="93.200" width="13.500" height="23.600" fill="none" stroke="#6e6e6e" stroke-width="2.200"/><rect x="2931.100" y="97" width="5.900" height="15.800" fill="none" stroke="#6e6e6e" stroke-width="2"/><rect x="2981.100" y="93.400" width="23.500" height="23.200" rx="5" fill="none" stroke="#6e6e6e" stroke-width="2.200"/><path d="M2989.200 93.400V116.600" stroke="#6e6e6e" stroke-width="2.200"/><path d="M2992.300 105.100H3001.700M2997 100.400V109.800" stroke="#6e6e6e" stroke-width="2"/></svg>
<div style="position:absolute;left:2960px;top:93.4px;width:1.8px;height:23.5px;background:#dcdcdc;"></div>
<svg style="position:absolute;left:851px;top:147.5px;" width="25.5" height="25.5" viewBox="0 0 30 30" preserveAspectRatio="none"><rect x="0" y="0" width="30" height="30" rx="6.8" fill="#3b7df0"/><rect x="3.1" y="3.1" width="23.8" height="23.8" rx="4.2" fill="none" stroke="#fff" stroke-width="1.4"/><g stroke="#fff" stroke-width="2.2" stroke-linecap="round" fill="none"><path d="M10.2 21.2L16.2 8.2"/><path d="M13.6 8.2L20.6 21.2"/><path d="M6.800 18.300H23.200"/></g></svg>
<span style="position:absolute;top:150.35px;font:400 22.5px/1 'Liberation Sans',sans-serif;color:#262626;white-space:pre;left:889.00px;letter-spacing:0.409px;">StudentsAndCourses</span>
<svg style="position:absolute;left:1118.5px;top:149.3px;" width="12" height="24" viewBox="0 0 12 24" preserveAspectRatio="none"><path d="M3.200 3L7.300 12.500 3.200 22" fill="none" stroke="#7c7c7c" stroke-width="2.300" stroke-linecap="round" stroke-linejoin="round"/></svg>
<svg style="position:absolute;left:1145px;top:149px;" width="25.5" height="21" viewBox="0 0 29 24" preserveAspectRatio="none"><path fill="#8a8e95" d="M0 4.2C0 1.9 1.5 .4 3.8 .4h5.4c1.3 0 2 .3 2.9 1.1l.9.8c.6.5 1.1.7 2 .7h10.2c2.3 0 3.8 1.5 3.8 3.8v.6H0z"/><path fill="#8a8e95" d="M0 9h29v10.8c0 2.3-1.5 3.8-3.8 3.8H3.8C1.500 23.6 0 22.100 0 19.800z"/></svg>
<span style="position:absolute;top:150.35px;font:400 22.5px/1 'Liberation Sans',sans-serif;color:#262626;white-space:pre;left:1182.60px;letter-spacing:0.409px;">StudentsAndCourses</span>
<svg style="position:absolute;left:1413px;top:149.3px;" width="12" height="24" viewBox="0 0 12 24" preserveAspectRatio="none"><path d="M3.200 3L7.300 12.500 3.200 22" fill="none" stroke="#7c7c7c" stroke-width="2.300" stroke-linecap="round" stroke-linejoin="round"/></svg>
<svg style="position:absolute;left:1439.4px;top:149px;" width="25.5" height="21" viewBox="0 0 29 24" preserveAspectRatio="none"><path fill="#8a8e95" d="M0 4.2C0 1.9 1.5 .4 3.8 .4h5.4c1.3 0 2 .3 2.9 1.1l.9.8c.6.5 1.1.7 2 .7h10.2c2.3 0 3.8 1.5 3.8 3.8v.6H0z"/><path fill="#8a8e95" d="M0 9h29v10.8c0 2.3-1.5 3.8-3.8 3.8H3.8C1.500 23.6 0 22.100 0 19.800z"/></svg>
<span style="position:absolute;top:150.35px;font:400 22.5px/1 'Liberation Sans',sans-serif;color:#262626;white-space:pre;left:1477.40px;letter-spacing:-0.043px;">Views</span>
<svg style="position:absolute;left:1546.7px;top:149.3px;" width="12" height="24" viewBox="0 0 12 24" preserveAspectRatio="none"><path d="M3.200 3L7.300 12.500 3.200 22" fill="none" stroke="#7c7c7c" stroke-width="2.300" stroke-linecap="round" stroke-linejoin="round"/></svg>
<svg style="position:absolute;left:1574px;top:148.8px;overflow:visible;" width="24.5" height="21.5" viewBox="2.3 3.3 18.4 16.6" preserveAspectRatio="none"><path fill="#f07446" d="M13.543 3.41c4.114 2.47 6.545 7.162 5.549 11.131-.024.093-.05.181-.076.272l.002.001c2.062 2.538 1.5 5.258 1.236 4.745-1.072-2.086-3.066-1.568-4.088-1.043a6.803 6.803 0 0 1-.281.158l-.02.012-.002.002c-2.115 1.123-4.957 1.205-7.812-.022a12.568 12.568 0 0 1-5.64-4.838c.649.48 1.35.902 2.097 1.252 3.019 1.414 6.051 1.311 8.197-.002C9.651 12.73 7.101 9.67 5.146 7.191a10.628 10.628 0 0 1-1.005-1.384c2.34 2.142 6.038 4.83 7.365 5.576C8.69 8.408 6.208 4.743 6.324 4.86c4.436 4.47 8.528 6.996 8.528 6.996.154.085.27.154.36.213.085-.215.16-.437.224-.668.708-2.588-.09-5.548-1.893-7.992z"/></svg>
<span style="position:absolute;top:150.35px;font:400 22.5px/1 'Liberation Sans',sans-serif;color:#262626;white-space:pre;left:1610.50px;letter-spacing:0.275px;">EnrolmentsByCourseView</span>
<svg style="position:absolute;left:1888.5px;top:149.3px;" width="12" height="24" viewBox="0 0 12 24" preserveAspectRatio="none"><path d="M3.200 3L7.300 12.500 3.200 22" fill="none" stroke="#7c7c7c" stroke-width="2.300" stroke-linecap="round" stroke-linejoin="round"/></svg>
<div style="position:absolute;left:1914px;top:146.5px;width:28px;height:27.5px;background:#c354dc;border-radius:6px;"></div>
<span style="position:absolute;top:149.93px;font:700 23px/1 'Liberation Sans',sans-serif;color:#fff;white-space:pre;left:1919.50px;">S</span>
<span style="position:absolute;top:150.35px;font:400 22.5px/1 'Liberation Sans',sans-serif;color:#262626;white-space:pre;left:1953.00px;letter-spacing:0.252px;">EnrolmentsByCourseView</span>
<div style="position:absolute;left:834px;top:190px;width:1410px;height:1643px;overflow:hidden;background:#fff;">
<div style="position:absolute;left:-834px;top:-190px;width:3024px;height:1888px;">
<div style="position:absolute;left:834px;top:413px;width:1410px;height:40px;background:#edf4fe;"></div>
<div style="position:absolute;left:932px;top:214.5px;width:14px;height:1556.5px;background:#e9e9e9;border-radius:7px 7px 7px 7px;"></div>
<div style="position:absolute;left:932px;top:574.5px;width:14px;height:1155.5px;background:#d6d6d6;border-radius:7px 7px 7px 7px;"></div>
<div style="position:absolute;left:932px;top:613px;width:14px;height:40px;background:#8f8f8f;"></div>
<svg style="position:absolute;left:935px;top:625px;" width="9" height="15" viewBox="0 0 9 15" preserveAspectRatio="none"><path d="M1.500 1.800L7 7.500 1.500 13.200" fill="none" stroke="#fff" stroke-width="2.200" stroke-linecap="round" stroke-linejoin="round"/></svg>
<div style="position:absolute;left:932px;top:654.5px;width:14px;height:435.5px;background:#c2c2c2;border-radius:7px 7px 7px 7px;"></div>
<div style="position:absolute;left:932px;top:694.5px;width:14px;height:76.0px;background:#adadad;border-radius:7px 7px 7px 7px;"></div>
<div style="position:absolute;left:932px;top:774.5px;width:14px;height:276.0px;background:#b0b0b0;border-radius:7px 7px 7px 7px;"></div>
<div style="position:absolute;left:932px;top:814.5px;width:14px;height:195.5px;background:#9d9d9d;border-radius:7px 7px 7px 7px;"></div>
<div style="position:absolute;left:932px;top:913.5px;width:14px;height:1.5px;background:#e6e6e6;"></div>
<div style="position:absolute;left:932px;top:1096px;width:14px;height:354px;background:#c2c2c2;border-radius:7px 7px 7px 7px;"></div>
<div style="position:absolute;left:932px;top:1175px;width:14px;height:235px;background:#adadad;border-radius:7px 7px 7px 7px;"></div>
<div style="position:absolute;left:932px;top:1814.5px;width:14px;height:78.5px;background:#e9e9e9;border-radius:7px 7px 0 0;"></div>
<div style="position:absolute;left:844.5px;top:413px;width:9.5px;height:120px;background:#a9c8fb;border-radius:4px;box-shadow:inset 0 0 0 1.500px #3b7cf4;"></div>
<div style="position:absolute;left:844.5px;top:653px;width:9.5px;height:840px;background:#a9c8fb;border-radius:4px;box-shadow:inset 0 0 0 1.500px #3b7cf4;"></div>
<div style="position:absolute;left:1808.7px;top:615px;width:55.7px;height:35.7px;background:#d9d9d9;border-radius:7px;"></div>
<div style="position:absolute;left:1817.1000000000001px;top:628.5px;width:8.6px;height:8.6px;background:#777;border-radius:50%;"></div>
<div style="position:absolute;left:1832.3px;top:628.5px;width:8.6px;height:8.6px;background:#777;border-radius:50%;"></div>
<div style="position:absolute;left:1847.4px;top:628.5px;width:8.6px;height:8.6px;background:#777;border-radius:50%;"></div>
<div class="cl" style="left:1868.5px;top:615.2px">}</div>
<div class="ln" style="top:174.5px">9</div>
<div class="ln" style="top:214.5px">10</div>
<div class="cl" style="top:215.2px"><span class="k">struct</span> <span class="td">EnrolmentsByCourseView</span>: <span class="st">View</span> {</div>
<div class="ln" style="top:254.5px">11</div>
<div class="ln" style="top:294.5px">12</div>
<div class="cl" style="top:295.2px">    <span class="c">// </span><span class="cm">MARK: Stored properties</span></div>
<div class="ln" style="top:334.5px">13</div>
<div class="cl" style="top:335.2px">    <span class="k">let</span> <span class="pd">viewModel</span>: <span class="pt">EnrolmentsByCourseViewModel</span></div>
<div class="ln" style="top:374.5px">14</div>
<div class="ln" style="top:414.5px;color:#111">15</div>
<div class="cl" style="top:415.2px">    <span class="c">// Are we showing the sheet to add an enrolment for a student?</span></div>
<div class="ln" style="top:454.5px">16</div>
<div class="cl" style="top:455.2px">    <span class="st">@State</span> <span class="k">private</span> <span class="k">var</span> <span class="pd">isAddEnrolmentSheetShowing</span> = <span class="k">false</span></div>
<div class="ln" style="top:494.5px">17</div>
<div class="ln" style="top:534.5px">18</div>
<div class="cl" style="top:535.2px">    <span class="c">// </span><span class="cm">MARK: Computed properties</span></div>
<div class="ln" style="top:574.5px">19</div>
<div class="cl" style="top:575.2px">    <span class="k">var</span> <span class="pd">body</span>: <span class="k">some</span> <span class="st">View</span> {</div>
<div class="ln" style="top:614.5px">20</div>
<div class="cl" style="top:615.2px">        <span class="st">List</span>(<span class="pm">viewModel</span>.<span class="pm">coursesWithStudents</span>) {</div>
<div class="ln" style="top:654.5px">58</div>
<div class="cl" style="top:655.2px">        .<span class="sf">toolbar</span> {</div>
<div class="ln" style="top:694.5px">59</div>
<div class="cl" style="top:695.2px">            <span class="c">// Only show the button when seeing courses for a</span></div>
<div class="ln" style="top:734.5px">60</div>
<div class="cl" style="top:735.2px">            <span class="c">// specific student</span></div>
<div class="ln" style="top:774.5px">61</div>
<div class="cl" style="top:775.2px">            <span class="k">if</span> <span class="pm">viewModel</span>.<span class="pm">isFilteredByStudent</span> {</div>
<div class="ln" style="top:814.5px">62</div>
<div class="cl" style="top:815.2px">                <span class="st">Button</span> {</div>
<div class="ln" style="top:854.5px">63</div>
<div class="cl" style="top:855.2px">                    <span class="pm">isAddEnrolmentSheetShowing</span> = <span class="k">true</span></div>
<div class="ln" style="top:894.5px">64</div>
<div class="cl" style="top:895.2px">                } <span class="sf">label</span>: {</div>
<div class="ln" style="top:934.5px">65</div>
<div class="cl" style="top:935.2px">                    <span class="st">Image</span>(<span class="sf">systemName</span>: <span class="s">"plus"</span>)</div>
<div class="ln" style="top:974.5px">66</div>
<div class="cl" style="top:975.2px">                }</div>
<div class="ln" style="top:1014.5px">67</div>
<div class="cl" style="top:1015.2px">            }</div>
<div class="ln" style="top:1054.5px">68</div>
<div class="cl" style="top:1055.2px">        }</div>
<div class="ln" style="top:1094.5px">69</div>
<div class="cl" style="top:1095.2px">        .<span class="sf">sheet</span>(<span class="sf">isPresented</span>: <span class="pm">$isAddEnrolmentSheetShowing</span>) {</div>
<div class="ln" style="top:1134.5px">70</div>
<div class="cl" style="top:1135.2px">            <span class="c">// Show the interface to add a student</span></div>
<div class="ln" style="top:1174.5px">71</div>
<div class="cl" style="top:1175.2px">            <span class="pt">AddEnrolmentFromEnrolmentsbyCourseView</span>(</div>
<div class="ln" style="top:1214.5px">72</div>
<div class="cl" style="top:1215.2px">                <span class="pm">isShowing</span>: <span class="pm">$isAddEnrolmentSheetShowing</span>,</div>
<div class="ln" style="top:1254.5px">73</div>
<div class="cl" style="top:1255.2px">                <span class="pm">viewModel</span>:</div>
<div class="cl" style="top:1295.2px">                    <span class="pt">AddEnrolmentFromEnrolmentsbyCourseViewModel</span></div>
<div class="cl" style="top:1335.2px">                    (<span class="pm">availableTo</span>: <span class="pm">viewModel</span>.<span class="pm">student</span>!)</div>
<div class="ln" style="top:1374.5px">74</div>
<div class="cl" style="top:1375.2px">            )</div>
<div class="ln" style="top:1414.5px">75</div>
<div class="cl" style="top:1415.2px">        }</div>
<div class="ln" style="top:1454.5px">76</div>
<div class="ln" style="top:1494.5px">77</div>
<div class="cl" style="top:1495.2px">        <span class="c">// Show the student name as the navigation title when</span></div>
<div class="cl" style="top:1535.2px">            <span class="c">filtering by a specific student</span></div>
<div class="ln" style="top:1574.5px">78</div>
<div class="cl" style="top:1575.2px">        .<span class="sf">navigationTitle</span>(<span class="pm">viewModel</span>.<span class="pm">isFilteredByStudent</span> ?</div>
<div class="cl" style="top:1615.2px">            <span class="s">"</span>\(<span class="pm">viewModel</span>.<span class="pm">student</span>!.<span class="pm">lastName</span>)<span class="s">,</span></div>
<div class="cl" style="top:1655.2px">            \(<span class="pm">viewModel</span>.<span class="pm">student</span>!.<span class="pm">firstName</span>)<span class="s">"</span> : <span class="s">"Courses"</span>)</div>
<div class="ln" style="top:1694.5px">79</div>
<div class="cl" style="top:1695.2px">    }</div>
<div class="ln" style="top:1734.5px">80</div>
<div class="cl" style="top:1735.2px">}</div>
<div class="ln" style="top:1774.5px">81</div>
<div class="ln" style="top:1814.5px">82</div>
<div class="cl" style="top:1815.2px"><span class="sf">#Preview</span> {</div>
</div></div>
<div style="position:absolute;left:2243px;top:190px;width:2px;height:1643px;background:#e7e7e7;"></div>
<div style="position:absolute;left:2245px;top:190px;width:26px;height:1643px;background:#fafafa;"></div>
<div style="position:absolute;left:2271px;top:190px;width:3.5px;height:1643px;background:#e8e8e8;"></div>
<div style="position:absolute;left:2251px;top:364px;width:16px;height:926px;background:#7f7f7f;border-radius:8px;"></div>
<div style="position:absolute;left:834px;top:1832px;width:2190px;height:2px;background:#e1e1e1;"></div>
<svg style="position:absolute;left:857px;top:1852px;" width="29.3" height="18" viewBox="0 0 31 20" preserveAspectRatio="none"><path d="M3.500 0h17c1.300 0 2.200.5 3 1.400l6.500 7.300c.7.800.7 1.800 0 2.600l-6.500 7.300c-.8.900-1.700 1.400-3 1.400h-17C1.300 20 0 18.700 0 16.500v-13C0 1.300 1.300 0 3.500 0z" fill="#3478f6"/></svg>
<span style="position:absolute;top:1848.78px;font:400 24px/1 'Liberation Sans',sans-serif;color:#878787;white-space:pre;left:2760.50px;letter-spacing:0.012px;-webkit-text-stroke:.45px #878787;">Line: 15  Col: 16</span>
<div style="position:absolute;left:2953.5px;top:1849px;width:2px;height:24px;background:#dedede;"></div>
<svg style="position:absolute;left:2972px;top:1847.7px;" width="28" height="27" viewBox="0 0 28 27" preserveAspectRatio="none"><rect x="1.500" y="1.500" width="25" height="24" rx="5" fill="none" stroke="#6e6e6e" stroke-width="2.200"/><rect x="5.300" y="16.500" width="17.400" height="6" rx="1.800" fill="#6e6e6e"/></svg>
<div style="position:absolute;left:2274.5px;top:190px;width:749.5px;height:1642px;background:#f2f2f2;"></div>
<div style="position:absolute;left:2299px;top:214px;width:63px;height:52px;background:#fff;border-radius:11px;box-shadow:0 1px 5px rgba(0,0,0,.16),0 0 1px rgba(0,0,0,.2);"></div>
<svg style="position:absolute;left:2318px;top:223px;" width="26" height="34" viewBox="0 0 26 34" preserveAspectRatio="none"><g fill="none" stroke="#4a4a4a" stroke-width="2.200" stroke-linejoin="round" stroke-linecap="round"><path d="M4.300 3.300h15.700"/><path d="M7.800 3.300v7.300c0 1.500-.8 2.400-2.200 3.700-1.800 1.700-3.200 3.900-3.200 7.400h19.400c0-3.500-1.400-5.700-3.200-7.400-1.400-1.300-2.200-2.200-2.200-3.700V3.300"/><path d="M12 21.800V31"/></g></svg>
<div style="position:absolute;left:2382px;top:214px;width:337px;height:52px;background:#cddcfb;border-radius:11px;box-shadow:0 1px 5px rgba(0,0,0,.16),0 0 1px rgba(0,0,0,.2);"></div>
<svg style="position:absolute;left:2398px;top:224px;" width="26" height="30" viewBox="0 0 26 30" preserveAspectRatio="none"><g fill="none" stroke="#3b7cf4" stroke-width="1.800"><rect x="2.300" y="9.800" width="21" height="16.300" rx="3.600"/><path d="M4.800 6.400h16.500M7.600 3.900h11" stroke-linecap="round"/></g></svg>
<span style="position:absolute;top:228.81px;font:400 23.5px/1 'Liberation Sans',sans-serif;color:#3478f6;white-space:pre;left:2434.50px;letter-spacing:-0.252px;">EnrolmentsByCourseView</span>
<div style="position:absolute;left:2323.5px;top:586px;width:9px;height:48.5px;background:#2d2d2d;border-radius:2px 0 0 2px;"></div>
<div style="position:absolute;left:2323.5px;top:678.5px;width:9px;height:93.0px;background:#2d2d2d;border-radius:2px 0 0 2px;"></div>
<div style="position:absolute;left:2323.5px;top:796.3px;width:9px;height:93.30000000000007px;background:#2d2d2d;border-radius:2px 0 0 2px;"></div>
<div style="position:absolute;left:2966px;top:739.6px;width:8.5px;height:149px;background:#2d2d2d;border-radius:0 2px 2px 0;"></div>
<div style="position:absolute;left:2353px;top:370px;width:593px;height:1282px;background:#f2f2f7;overflow:hidden;border-radius:80px;">
<div style="position:absolute;left:-2353px;top:-370px;width:3024px;height:1888px;">
<div style="position:absolute;left:2556px;top:389px;width:187.5px;height:55px;background:#000;border-radius:27.500px;"></div>
<span style="position:absolute;top:531.01px;font:700 51.5px/1 'Liberation Sans',sans-serif;color:#000;white-space:pre;left:2379.00px;letter-spacing:-1.440px;">Courses</span>
<div style="position:absolute;left:2385px;top:597px;width:529px;height:1100px;background:#fff;border-radius:15px;"></div>
<span style="position:absolute;top:616.81px;font:700 25.5px/1 'Liberation Sans',sans-serif;color:#000;white-space:pre;left:2415.00px;">ADA3M</span>
<span style="position:absolute;top:650.00px;font:400 22.8px/1 'Liberation Sans',sans-serif;color:#000;white-space:pre;left:2415.30px;">Drama</span>
<span style="position:absolute;top:626.35px;font:400 34.5px/1 'Liberation Sans',sans-serif;color:#87878b;white-space:pre;right:168.70px;transform:scaleX(.94);transform-origin:100% 50%;">0</span>
<svg style="position:absolute;left:2836px;top:628.35px;" width="22" height="28" viewBox="0 0 22 28" preserveAspectRatio="none"><path d="M5.200 18.200L15 9.700" stroke="#87878b" stroke-width="2.300" stroke-linecap="round"/></svg>
<svg style="position:absolute;left:2869px;top:630.95px;" width="18" height="24" viewBox="0 0 18 24" preserveAspectRatio="none"><path d="M4.700 4.300L12.900 12 4.700 19.700" fill="none" stroke="#c4c4c7" stroke-width="2.900" stroke-linecap="round" stroke-linejoin="round"/></svg>
<div style="position:absolute;left:2415px;top:689.9px;width:499px;height:1.3px;background:#dededf;"></div>
<span style="position:absolute;top:710.71px;font:700 25.5px/1 'Liberation Sans',sans-serif;color:#000;white-space:pre;left:2415.00px;">AMU3M</span>
<span style="position:absolute;top:743.90px;font:400 22.8px/1 'Liberation Sans',sans-serif;color:#000;white-space:pre;left:2415.30px;">Music</span>
<span style="position:absolute;top:720.25px;font:400 34.5px/1 'Liberation Sans',sans-serif;color:#87878b;white-space:pre;right:168.70px;transform:scaleX(.94);transform-origin:100% 50%;">0</span>
<svg style="position:absolute;left:2836px;top:722.25px;" width="22" height="28" viewBox="0 0 22 28" preserveAspectRatio="none"><path d="M5.200 18.200L15 9.700" stroke="#87878b" stroke-width="2.300" stroke-linecap="round"/></svg>
<svg style="position:absolute;left:2869px;top:724.85px;" width="18" height="24" viewBox="0 0 18 24" preserveAspectRatio="none"><path d="M4.700 4.300L12.900 12 4.700 19.700" fill="none" stroke="#c4c4c7" stroke-width="2.900" stroke-linecap="round" stroke-linejoin="round"/></svg>
<div style="position:absolute;left:2415px;top:783.8px;width:499px;height:1.3px;background:#dededf;"></div>
<span style="position:absolute;top:804.61px;font:700 25.5px/1 'Liberation Sans',sans-serif;color:#000;white-space:pre;left:2415.00px;">AVI3M</span>
<span style="position:absolute;top:837.80px;font:400 22.8px/1 'Liberation Sans',sans-serif;color:#000;white-space:pre;left:2415.30px;">Visual Arts</span>
<span style="position:absolute;top:814.15px;font:400 34.5px/1 'Liberation Sans',sans-serif;color:#87878b;white-space:pre;right:168.70px;transform:scaleX(.94);transform-origin:100% 50%;">0</span>
<svg style="position:absolute;left:2836px;top:816.15px;" width="22" height="28" viewBox="0 0 22 28" preserveAspectRatio="none"><path d="M5.200 18.200L15 9.700" stroke="#87878b" stroke-width="2.300" stroke-linecap="round"/></svg>
<svg style="position:absolute;left:2869px;top:818.75px;" width="18" height="24" viewBox="0 0 18 24" preserveAspectRatio="none"><path d="M4.700 4.300L12.900 12 4.700 19.700" fill="none" stroke="#c4c4c7" stroke-width="2.900" stroke-linecap="round" stroke-linejoin="round"/></svg>
<div style="position:absolute;left:2415px;top:877.6999999999999px;width:499px;height:1.3px;background:#dededf;"></div>
<span style="position:absolute;top:898.51px;font:700 25.5px/1 'Liberation Sans',sans-serif;color:#000;white-space:pre;left:2415.00px;">CGG3O</span>
<span style="position:absolute;top:931.70px;font:400 22.8px/1 'Liberation Sans',sans-serif;color:#000;white-space:pre;left:2415.30px;">Travel and Tourism: A Regional</span>
<span style="position:absolute;top:961.70px;font:400 22.8px/1 'Liberation Sans',sans-serif;color:#000;white-space:pre;left:2415.30px;">Geographic Perspective</span>
<span style="position:absolute;top:925.16px;font:400 35px/1 'Liberation Mono',monospace;color:#87878b;white-space:pre;right:166.40px;transform:scaleX(.91);transform-origin:100% 50%;">2</span>
<svg style="position:absolute;left:2869px;top:927.8px;" width="18" height="24" viewBox="0 0 18 24" preserveAspectRatio="none"><path d="M4.700 4.300L12.900 12 4.700 19.700" fill="none" stroke="#c4c4c7" stroke-width="2.900" stroke-linecap="round" stroke-linejoin="round"/></svg>
<div style="position:absolute;left:2415px;top:1001.9px;width:499px;height:1.3px;background:#dededf;"></div>
<span style="position:absolute;top:1022.71px;font:700 25.5px/1 'Liberation Sans',sans-serif;color:#000;white-space:pre;left:2415.00px;">CHW3M</span>
<span style="position:absolute;top:1055.90px;font:400 22.8px/1 'Liberation Sans',sans-serif;color:#000;white-space:pre;left:2415.30px;">World History to the End of the</span>
<span style="position:absolute;top:1085.90px;font:400 22.8px/1 'Liberation Sans',sans-serif;color:#000;white-space:pre;left:2415.30px;">Fifteenth Century</span>
<span style="position:absolute;top:1049.36px;font:400 35px/1 'Liberation Mono',monospace;color:#87878b;white-space:pre;right:166.40px;transform:scaleX(.91);transform-origin:100% 50%;">1</span>
<svg style="position:absolute;left:2869px;top:1052.0px;" width="18" height="24" viewBox="0 0 18 24" preserveAspectRatio="none"><path d="M4.700 4.300L12.900 12 4.700 19.700" fill="none" stroke="#c4c4c7" stroke-width="2.900" stroke-linecap="round" stroke-linejoin="round"/></svg>
<div style="position:absolute;left:2415px;top:1126.1px;width:499px;height:1.3px;background:#dededf;"></div>
<span style="position:absolute;top:1146.91px;font:700 25.5px/1 'Liberation Sans',sans-serif;color:#000;white-space:pre;left:2415.00px;">ENG3U</span>
<span style="position:absolute;top:1180.10px;font:400 22.8px/1 'Liberation Sans',sans-serif;color:#000;white-space:pre;left:2415.30px;">English</span>
<span style="position:absolute;top:1158.41px;font:400 35px/1 'Liberation Mono',monospace;color:#87878b;white-space:pre;right:166.40px;transform:scaleX(.91);transform-origin:100% 50%;">3</span>
<svg style="position:absolute;left:2869px;top:1161.05px;" width="18" height="24" viewBox="0 0 18 24" preserveAspectRatio="none"><path d="M4.700 4.300L12.900 12 4.700 19.700" fill="none" stroke="#c4c4c7" stroke-width="2.900" stroke-linecap="round" stroke-linejoin="round"/></svg>
<div style="position:absolute;left:2415px;top:1220.0px;width:499px;height:1.3px;background:#dededf;"></div>
<span style="position:absolute;top:1240.81px;font:700 25.5px/1 'Liberation Sans',sans-serif;color:#000;white-space:pre;left:2415.00px;">FSF3U</span>
<span style="position:absolute;top:1274.00px;font:400 22.8px/1 'Liberation Sans',sans-serif;color:#000;white-space:pre;left:2415.30px;">Core French</span>
<span style="position:absolute;top:1250.35px;font:400 34.5px/1 'Liberation Sans',sans-serif;color:#87878b;white-space:pre;right:168.70px;transform:scaleX(.94);transform-origin:100% 50%;">0</span>
<svg style="position:absolute;left:2836px;top:1252.35px;" width="22" height="28" viewBox="0 0 22 28" preserveAspectRatio="none"><path d="M5.200 18.200L15 9.700" stroke="#87878b" stroke-width="2.300" stroke-linecap="round"/></svg>
<svg style="position:absolute;left:2869px;top:1254.95px;" width="18" height="24" viewBox="0 0 18 24" preserveAspectRatio="none"><path d="M4.700 4.300L12.900 12 4.700 19.700" fill="none" stroke="#c4c4c7" stroke-width="2.900" stroke-linecap="round" stroke-linejoin="round"/></svg>
<div style="position:absolute;left:2415px;top:1313.9px;width:499px;height:1.3px;background:#dededf;"></div>
<span style="position:absolute;top:1334.71px;font:700 25.5px/1 'Liberation Sans',sans-serif;color:#000;white-space:pre;left:2415.00px;">ICS3U</span>
<span style="position:absolute;top:1367.90px;font:400 22.8px/1 'Liberation Sans',sans-serif;color:#000;white-space:pre;left:2415.30px;">Introduction to Computer Science</span>
<span style="position:absolute;top:1346.21px;font:400 35px/1 'Liberation Mono',monospace;color:#87878b;white-space:pre;right:166.40px;transform:scaleX(.91);transform-origin:100% 50%;">2</span>
<svg style="position:absolute;left:2869px;top:1348.8500000000001px;" width="18" height="24" viewBox="0 0 18 24" preserveAspectRatio="none"><path d="M4.700 4.300L12.900 12 4.700 19.700" fill="none" stroke="#c4c4c7" stroke-width="2.900" stroke-linecap="round" stroke-linejoin="round"/></svg>
<div style="position:absolute;left:2415px;top:1407.8000000000002px;width:499px;height:1.3px;background:#dededf;"></div>
<span style="position:absolute;top:1428.61px;font:700 25.5px/1 'Liberation Sans',sans-serif;color:#000;white-space:pre;left:2415.00px;">MCR3U</span>
<span style="position:absolute;top:1461.80px;font:400 22.8px/1 'Liberation Sans',sans-serif;color:#000;white-space:pre;left:2415.30px;">Functions</span>
<span style="position:absolute;top:1440.11px;font:400 35px/1 'Liberation Mono',monospace;color:#87878b;white-space:pre;right:166.40px;transform:scaleX(.91);transform-origin:100% 50%;">3</span>
<svg style="position:absolute;left:2869px;top:1442.7500000000002px;" width="18" height="24" viewBox="0 0 18 24" preserveAspectRatio="none"><path d="M4.700 4.300L12.900 12 4.700 19.700" fill="none" stroke="#c4c4c7" stroke-width="2.900" stroke-linecap="round" stroke-linejoin="round"/></svg>
<div style="position:absolute;left:2415px;top:1501.7000000000003px;width:499px;height:1.3px;background:#dededf;"></div>
<span style="position:absolute;top:1522.51px;font:700 25.5px/1 'Liberation Sans',sans-serif;color:#000;white-space:pre;left:2415.00px;">SBI3U</span>
<span style="position:absolute;top:1555.70px;font:400 22.8px/1 'Liberation Sans',sans-serif;color:#000;white-space:pre;left:2415.30px;">Biology</span>
<span style="position:absolute;top:1534.01px;font:400 35px/1 'Liberation Mono',monospace;color:#87878b;white-space:pre;right:166.40px;transform:scaleX(.91);transform-origin:100% 50%;">1</span>
<svg style="position:absolute;left:2869px;top:1536.6500000000003px;" width="18" height="24" viewBox="0 0 18 24" preserveAspectRatio="none"><path d="M4.700 4.300L12.900 12 4.700 19.700" fill="none" stroke="#c4c4c7" stroke-width="2.900" stroke-linecap="round" stroke-linejoin="round"/></svg>
<div style="position:absolute;left:2415px;top:1595.6000000000004px;width:499px;height:1.3px;background:#dededf;"></div>
<span style="position:absolute;top:1616.41px;font:700 25.5px/1 'Liberation Sans',sans-serif;color:#000;white-space:pre;left:2415.00px;">SCH3U</span>
<span style="position:absolute;top:1649.60px;font:400 22.8px/1 'Liberation Sans',sans-serif;color:#000;white-space:pre;left:2415.30px;">Chemistry</span>
<span style="position:absolute;top:1627.91px;font:400 35px/1 'Liberation Mono',monospace;color:#87878b;white-space:pre;right:166.40px;transform:scaleX(.91);transform-origin:100% 50%;">1</span>
<svg style="position:absolute;left:2869px;top:1630.5500000000004px;" width="18" height="24" viewBox="0 0 18 24" preserveAspectRatio="none"><path d="M4.700 4.300L12.900 12 4.700 19.700" fill="none" stroke="#c4c4c7" stroke-width="2.900" stroke-linecap="round" stroke-linejoin="round"/></svg>
<div style="position:absolute;left:2415px;top:1689.5000000000005px;width:499px;height:1.3px;background:#dededf;"></div>
</div></div>
<svg style="position:absolute;left:2320px;top:340px;" width="660" height="1345" viewBox="2320 340 660 1345" preserveAspectRatio="none"><path d="M2492.77 348.00L2805.73 348.00C2852.16 348.00 2875.38 348.00 2896.32 354.91L2900.38 355.90C2927.67 365.84 2949.16 387.33 2959.10 414.62C2967.00 439.62 2967.00 462.84 2967.00 509.27L2967.00 1511.73C2967.00 1558.16 2967.00 1581.38 2960.09 1602.32L2959.10 1606.38C2949.16 1633.67 2927.67 1655.16 2900.38 1665.10C2875.38 1673.00 2852.16 1673.00 2805.73 1673.00L2492.77 1673.00C2446.34 1673.00 2423.12 1673.00 2402.18 1666.09L2398.12 1665.10C2370.83 1655.16 2349.34 1633.67 2339.40 1606.38C2331.50 1581.38 2331.50 1558.16 2331.50 1511.73L2331.50 509.27C2331.50 462.84 2331.50 439.62 2338.41 418.68L2339.40 414.62C2349.34 387.33 2370.83 365.84 2398.12 355.90C2423.12 348.00 2446.34 348.00 2492.77 348.00ZM2484.17 372.00L2814.83 372.00C2852.02 372.00 2870.62 372.00 2887.39 377.53L2890.64 378.33C2912.50 386.29 2929.71 403.50 2937.67 425.36C2944.00 445.38 2944.00 463.98 2944.00 501.17L2944.00 1520.83C2944.00 1558.02 2944.00 1576.62 2938.47 1593.39L2937.67 1596.64C2929.71 1618.50 2912.50 1635.71 2890.64 1643.67C2870.62 1650.00 2852.02 1650.00 2814.83 1650.00L2484.17 1650.00C2446.98 1650.00 2428.38 1650.00 2411.61 1644.47L2408.36 1643.67C2386.50 1635.71 2369.29 1618.50 2361.33 1596.64C2355.00 1576.62 2355.00 1558.02 2355.00 1520.83L2355.00 501.17C2355.00 463.98 2355.00 445.38 2360.53 428.61L2361.33 425.36C2369.29 403.50 2386.50 386.29 2408.36 378.33C2428.38 372.00 2446.98 372.00 2484.17 372.00Z" fill="#000" fill-rule="evenodd"/><path d="M2492.77 348.00L2805.73 348.00C2852.16 348.00 2875.38 348.00 2896.32 354.91L2900.38 355.90C2927.67 365.84 2949.16 387.33 2959.10 414.62C2967.00 439.62 2967.00 462.84 2967.00 509.27L2967.00 1511.73C2967.00 1558.16 2967.00 1581.38 2960.09 1602.32L2959.10 1606.38C2949.16 1633.67 2927.67 1655.16 2900.38 1665.10C2875.38 1673.00 2852.16 1673.00 2805.73 1673.00L2492.77 1673.00C2446.34 1673.00 2423.12 1673.00 2402.18 1666.09L2398.12 1665.10C2370.83 1655.16 2349.34 1633.67 2339.40 1606.38C2331.50 1581.38 2331.50 1558.16 2331.50 1511.73L2331.50 509.27C2331.50 462.84 2331.50 439.62 2338.41 418.68L2339.40 414.62C2349.34 387.33 2370.83 365.84 2398.12 355.90C2423.12 348.00 2446.34 348.00 2492.77 348.00ZM2489.87 355.80L2808.63 355.80C2851.98 355.80 2873.66 355.80 2893.21 362.25L2897.00 363.18C2922.48 372.45 2942.55 392.52 2951.82 418.00C2959.20 441.34 2959.20 463.02 2959.20 506.37L2959.20 1514.63C2959.20 1557.98 2959.20 1579.66 2952.75 1599.21L2951.82 1603.00C2942.55 1628.48 2922.48 1648.55 2897.00 1657.82C2873.66 1665.20 2851.98 1665.20 2808.63 1665.20L2489.87 1665.20C2446.52 1665.20 2424.84 1665.20 2405.29 1658.75L2401.50 1657.82C2376.02 1648.55 2355.95 1628.48 2346.68 1603.00C2339.30 1579.66 2339.30 1557.98 2339.30 1514.63L2339.30 506.37C2339.30 463.02 2339.30 441.34 2345.75 421.79L2346.68 418.00C2355.95 392.52 2376.02 372.45 2401.50 363.18C2424.84 355.80 2446.52 355.80 2489.87 355.80Z" fill="#2c2c2c" fill-rule="evenodd"/><path d="M2492.77 348.00L2805.73 348.00C2852.16 348.00 2875.38 348.00 2896.32 354.91L2900.38 355.90C2927.67 365.84 2949.16 387.33 2959.10 414.62C2967.00 439.62 2967.00 462.84 2967.00 509.27L2967.00 1511.73C2967.00 1558.16 2967.00 1581.38 2960.09 1602.32L2959.10 1606.38C2949.16 1633.67 2927.67 1655.16 2900.38 1665.10C2875.38 1673.00 2852.16 1673.00 2805.73 1673.00L2492.77 1673.00C2446.34 1673.00 2423.12 1673.00 2402.18 1666.09L2398.12 1665.10C2370.83 1655.16 2349.34 1633.67 2339.40 1606.38C2331.50 1581.38 2331.50 1558.16 2331.50 1511.73L2331.50 509.27C2331.50 462.84 2331.50 439.62 2338.41 418.68L2339.40 414.62C2349.34 387.33 2370.83 365.84 2398.12 355.90C2423.12 348.00 2446.34 348.00 2492.77 348.00Z" fill="none" stroke="rgba(0,0,0,.35)" stroke-width="1"/><g fill="#222"><rect x="2331.5" y="487" width="8" height="8"/><rect x="2959" y="487" width="8" height="8"/><rect x="2331.5" y="1528" width="8" height="8"/><rect x="2959" y="1528" width="8" height="8"/><rect x="2826" y="348" width="8" height="8"/><rect x="2466" y="1665" width="8" height="8"/></g></svg>
<div style="position:absolute;left:2299px;top:1756px;width:163px;height:52px;background:#fff;border-radius:12px;box-shadow:0 1px 5px rgba(0,0,0,.16),0 0 1px rgba(0,0,0,.2);"></div>
<div style="position:absolute;left:2482px;top:1756px;width:63px;height:52px;background:#fff;border-radius:12px;box-shadow:0 1px 5px rgba(0,0,0,.16),0 0 1px rgba(0,0,0,.2);"></div>
<div style="position:absolute;left:2565px;top:1756px;width:54px;height:52px;background:#fff;border-radius:12px;box-shadow:0 1px 5px rgba(0,0,0,.16),0 0 1px rgba(0,0,0,.2);"></div>
<div style="position:absolute;left:2792px;top:1756px;width:208px;height:52px;background:#fff;border-radius:12px;box-shadow:0 1px 5px rgba(0,0,0,.16),0 0 1px rgba(0,0,0,.2);"></div>
<svg style="position:absolute;left:2317px;top:1769px;" width="26" height="26" viewBox="0 0 27 27" preserveAspectRatio="none"><circle cx="13.500" cy="13.500" r="13.500" fill="#3478f6"/><path d="M10 7.300c0-.7.700-1.100 1.300-.7l8.700 6.200c.5.400.5 1 0 1.400l-8.700 6.200c-.6.400-1.300 0-1.300-.7z" fill="#fff"/></svg>
<svg style="position:absolute;left:2365px;top:1770px;" width="23.6" height="23.6" viewBox="0 0 25 25" preserveAspectRatio="none"><rect x="1.300" y="1.300" width="22.400" height="22.400" rx="3.200" fill="none" stroke="#4a4a4a" stroke-width="2.200"/><path d="M9 5.500v13l3.200-3 2.300 5 2.300-1-2.300-5h4.300z" fill="#4a4a4a"/></svg>
<svg style="position:absolute;left:2418.7px;top:1771.5px;" width="23.3" height="20.5" viewBox="0 0 25 22" preserveAspectRatio="none"><rect x="1.0" y="1.0" width="5.200" height="8" fill="none" stroke="#4a4a4a" stroke-width="1.700"/><rect x="9.7" y="1.0" width="5.200" height="8" fill="none" stroke="#4a4a4a" stroke-width="1.700"/><rect x="18.4" y="1.0" width="5.200" height="8" fill="none" stroke="#4a4a4a" stroke-width="1.700"/><rect x="1.0" y="12.5" width="5.200" height="8" fill="none" stroke="#4a4a4a" stroke-width="1.700"/><rect x="9.7" y="12.5" width="5.200" height="8" fill="none" stroke="#4a4a4a" stroke-width="1.700"/><rect x="18.4" y="12.5" width="5.200" height="8" fill="none" stroke="#4a4a4a" stroke-width="1.700"/></svg>
<svg style="position:absolute;left:2500.7px;top:1770px;" width="24.5" height="24.8" viewBox="0 0 26 26" preserveAspectRatio="none"><rect x="1.200" y="1.200" width="23.600" height="9.800" rx="4.900" fill="none" stroke="#4a4a4a" stroke-width="2"/><circle cx="6.300" cy="6.100" r="2.900" fill="#4a4a4a"/><rect x=".2" y="14.600" width="25.600" height="11" rx="5.500" fill="#4a4a4a"/><circle cx="19.700" cy="20.100" r="3" fill="#fff"/></svg>
<svg style="position:absolute;left:2584.8px;top:1770.7px;" width="14" height="23" viewBox="0 0 16 24" preserveAspectRatio="none"><rect x="1.100" y="1.100" width="13.800" height="21.800" rx="3" fill="#d6d6d6" stroke="#4a4a4a" stroke-width="2"/><path d="M5.800 3.800h4.400M5.500 20.300h5" stroke="#4a4a4a" stroke-width="1.500" stroke-linecap="round"/></svg>
<svg style="position:absolute;left:2810px;top:1769px;" width="27" height="27" viewBox="0 0 27 27" preserveAspectRatio="none"><circle cx="11.300" cy="10.800" r="9" fill="none" stroke="#4a4a4a" stroke-width="2.900"/><path d="M18 17.500L25 24.300" stroke="#4a4a4a" stroke-width="3.500" stroke-linecap="round"/><g transform="translate(.3,-.2)"><path d="M6.800 11h8.400" stroke="#4a4a4a" stroke-width="2" stroke-linecap="round"/></g></svg>
<svg style="position:absolute;left:2858px;top:1769px;" width="27" height="27" viewBox="0 0 27 27" preserveAspectRatio="none"><circle cx="11.300" cy="10.800" r="9" fill="none" stroke="#4a4a4a" stroke-width="2.900"/><path d="M18 17.500L25 24.300" stroke="#4a4a4a" stroke-width="3.500" stroke-linecap="round"/><g transform="translate(.3,-.2)"><path d="M9.300 8.300l2.200-1.500v8.500" fill="none" stroke="#4a4a4a" stroke-width="1.900" stroke-linecap="round" stroke-linejoin="round"/></g></svg>
<svg style="position:absolute;left:2906px;top:1769px;" width="27" height="27" viewBox="0 0 27 27" preserveAspectRatio="none"><circle cx="11.300" cy="10.800" r="9" fill="none" stroke="#4a4a4a" stroke-width="2.900"/><path d="M18 17.500L25 24.300" stroke="#4a4a4a" stroke-width="3.500" stroke-linecap="round"/><g transform="translate(.3,-.2)"><rect x="7.300" y="7.300" width="7.400" height="7.400" rx="1.500" fill="none" stroke="#4a4a4a" stroke-width="2"/></g></svg>
<svg style="position:absolute;left:2954px;top:1769px;" width="27" height="27" viewBox="0 0 27 27" preserveAspectRatio="none"><circle cx="11.300" cy="10.800" r="9" fill="none" stroke="#4a4a4a" stroke-width="2.900"/><path d="M18 17.500L25 24.300" stroke="#4a4a4a" stroke-width="3.500" stroke-linecap="round"/><g transform="translate(.3,-.2)"><path d="M6.800 11h8.400M11 6.800v8.400" stroke="#4a4a4a" stroke-width="2" stroke-linecap="round"/></g></svg>
</div></body></html>
